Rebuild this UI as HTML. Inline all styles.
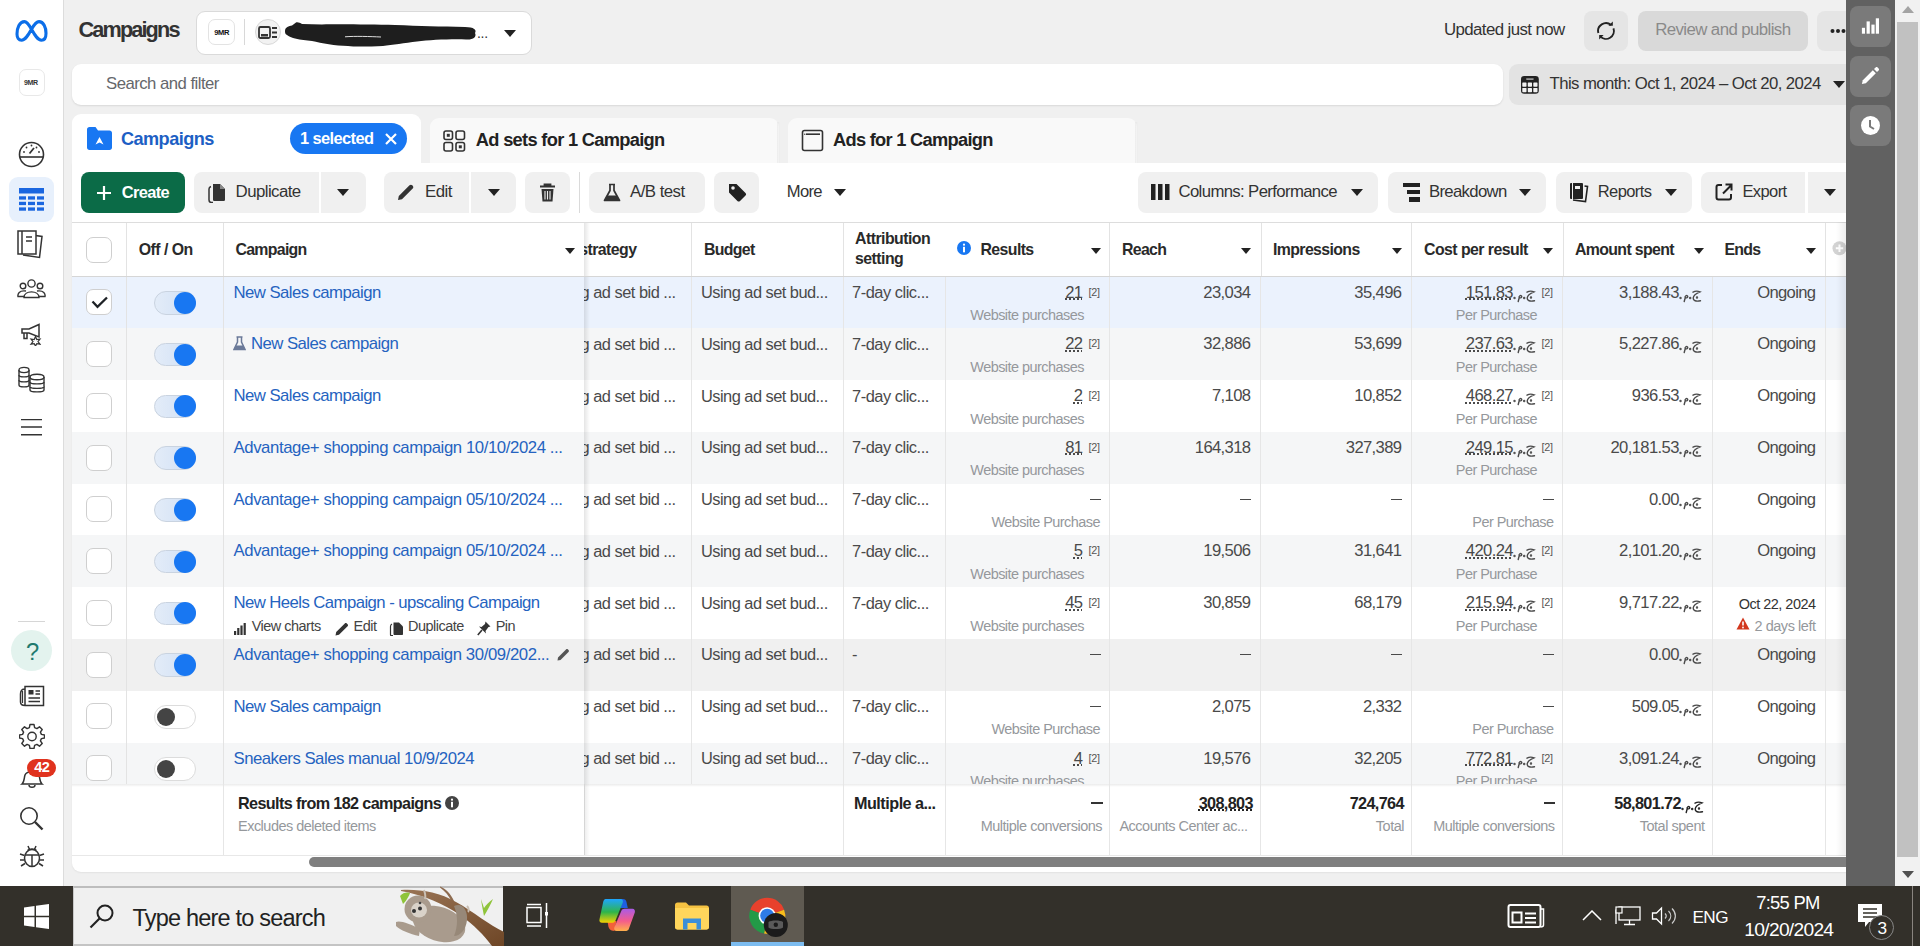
<!DOCTYPE html><html><head><meta charset="utf-8"><style>
html,body{margin:0;padding:0;}
body{width:1920px;height:946px;overflow:hidden;position:relative;background:#f0f0f0;font-family:"Liberation Sans", sans-serif;}
.t{position:absolute;white-space:nowrap;line-height:0;}
.r{position:absolute;}
.du{text-decoration:underline dotted 1.5px;text-underline-offset:1px;}
</style></head><body>
<div class="r" style="left:0.00px;top:0.00px;width:63.00px;height:886.00px;background:#fff;"></div>
<div class="r" style="left:63.00px;top:0.00px;width:1.00px;height:886.00px;background:#dcdcdc;"></div>
<svg class="r" style="left:14.00px;top:19.00px;" width="35" height="25" viewBox="0 0 35 25"><path d="M7.5 21.2 C11.5 21.2 14.5 15.5 17.5 10.2 C20 5.8 22 2.6 25 2.6 C29.5 2.6 32 8.5 32 14.2 C32 18.5 30.5 21.2 27.5 21.2 C23.5 21.2 20.5 15.5 17.5 10.2 C15 5.8 13 2.6 10.5 2.6 C5.5 2.6 3 9 3 15 C3 18.8 4.8 21.2 7.5 21.2Z" fill="none" stroke="#0c6ee8" stroke-width="3.1"/></svg>
<div class="r" style="left:18.50px;top:69.00px;width:26.00px;height:26.50px;background:#fff;border:1px solid #e8e8e8;border-radius:7px;box-sizing:border-box;"></div>
<div class="t" style="left:24.00px;top:82.50px;font-size:7.02px;color:#333;font-weight:700;letter-spacing:-0.366px;">9MR</div>
<svg class="r" style="left:18.00px;top:141.00px;" width="27" height="27" viewBox="0 0 27 27"><circle cx="13.5" cy="13.5" r="12" fill="none" stroke="#333" stroke-width="1.6"/><path d="M1.8 16H25.2" stroke="#333" stroke-width="1.6"/><path d="M11.5 12.5L16 7" stroke="#333" stroke-width="1.8"/><circle cx="6" cy="11" r="0.9" fill="#333"/><circle cx="8.5" cy="6.5" r="0.9" fill="#333"/><circle cx="13.5" cy="4.5" r="0.9" fill="#333"/><circle cx="18.5" cy="6.5" r="0.9" fill="#333"/><circle cx="21" cy="11" r="0.9" fill="#333"/></svg>
<div class="r" style="left:9.00px;top:177.00px;width:45.00px;height:45.00px;background:#e7f0fc;border-radius:9px;"></div>
<svg class="r" style="left:19.00px;top:188.00px;" width="25" height="23" viewBox="0 0 25 23"><rect x="0" y="0" width="25" height="5.5" fill="#1a66e0"/><rect x="0" y="8.3" width="7" height="3.3" fill="#1a66e0"/><rect x="0" y="13.8" width="7" height="3.3" fill="#1a66e0"/><rect x="0" y="19.4" width="7" height="3.3" fill="#1a66e0"/><rect x="9" y="8.3" width="7" height="3.3" fill="#1a66e0"/><rect x="9" y="13.8" width="7" height="3.3" fill="#1a66e0"/><rect x="9" y="19.4" width="7" height="3.3" fill="#1a66e0"/><rect x="18" y="8.3" width="7" height="3.3" fill="#1a66e0"/><rect x="18" y="13.8" width="7" height="3.3" fill="#1a66e0"/><rect x="18" y="19.4" width="7" height="3.3" fill="#1a66e0"/></svg>
<svg class="r" style="left:17.00px;top:230.00px;" width="28" height="29" viewBox="0 0 28 29"><path d="M8 4 L25 6.5 L22.5 27.5 L6 25" fill="#fff" stroke="#333" stroke-width="1.5"/><rect x="1" y="1" width="18" height="23" fill="#fff" stroke="#333" stroke-width="1.5"/><path d="M5 1V24" stroke="#333" stroke-width="1.5"/><path d="M9 7H15M9 11H15" stroke="#333" stroke-width="1.5"/></svg>
<svg class="r" style="left:17.00px;top:279.00px;" width="29" height="20" viewBox="0 0 29 20"><circle cx="14.5" cy="4.5" r="3.6" fill="none" stroke="#333" stroke-width="1.4"/><circle cx="6" cy="7" r="2.8" fill="none" stroke="#333" stroke-width="1.4"/><circle cx="23" cy="7" r="2.8" fill="none" stroke="#333" stroke-width="1.4"/><path d="M7 18.5 C7 11 22 11 22 18.5Z" fill="#fff" stroke="#333" stroke-width="1.4"/><path d="M9 12 C2 11 0.5 15 1 17.5 H7" fill="none" stroke="#333" stroke-width="1.4"/><path d="M20 12 C27 11 28.5 15 28 17.5 H22" fill="none" stroke="#333" stroke-width="1.4"/></svg>
<svg class="r" style="left:20.00px;top:323.00px;" width="23" height="23" viewBox="0 0 23 23"><path d="M2 6 H9 L19 1.5 V14 L9 10 H2Z" fill="none" stroke="#333" stroke-width="1.5"/><path d="M4 10 V15.5 H7 V10" fill="none" stroke="#333" stroke-width="1.5"/><path d="M15.5 13.5 L16.8 16.5 L20 16 L18 18.6 L20 21.2 L16.8 20.7 L15.5 23 L14.2 20.7 L11 21.2 L13 18.6 L11 16 L14.2 16.5Z" fill="#fff" stroke="#333" stroke-width="1.2"/></svg>
<svg class="r" style="left:18.00px;top:366.00px;" width="28" height="28" viewBox="0 0 28 28"><g fill="#fff" stroke="#333" stroke-width="1.4"><path d="M1 4 V19 C1 21.5 11 21.5 11 19 V4"/><ellipse cx="6" cy="4" rx="5" ry="2.6"/><path d="M1 9 C1 11.5 11 11.5 11 9M1 14 C1 16.5 11 16.5 11 14"/><path d="M12 11 V24 C12 26.5 26 26.5 26 24 V11"/><ellipse cx="19" cy="11" rx="7" ry="2.8"/><path d="M12 16 C12 18.5 26 18.5 26 16M12 20.5 C12 23 26 23 26 20.5"/></g></svg>
<svg class="r" style="left:20.00px;top:418.00px;" width="23" height="19" viewBox="0 0 23 19"><path d="M1 1.6H22M1 9H22M1 16.8H22" stroke="#333" stroke-width="1.4"/></svg>
<div class="r" style="left:18.00px;top:621.00px;width:27.00px;height:1.00px;background:#d6d6d6;"></div>
<div class="r" style="left:11.00px;top:630.00px;width:41.00px;height:41.00px;background:#e3f3ee;border-radius:50%;"></div>
<div class="t" style="left:-268.01px;width:600px;text-align:center;top:651.50px;font-size:23.76px;color:#1f7a6e;font-weight:400;letter-spacing:-0.979px;">?</div>
<svg class="r" style="left:19.00px;top:685.00px;" width="26" height="23" viewBox="0 0 26 23"><path d="M6 1.5 H24.5 V20.5 H6Z M6 4 C3 4 1.5 6 1.5 9 V17 C1.5 19.5 3.5 20.5 6 20.5" fill="none" stroke="#333" stroke-width="1.5"/><path d="M3.5 6 V18" stroke="#333" stroke-width="1.2"/><rect x="9.5" y="5" width="5" height="4.5" fill="#333"/><path d="M9.5 13H21M9.5 16.5H21M16.5 6H21M16.5 9H21" stroke="#333" stroke-width="1.3"/></svg>
<svg class="r" style="left:19.00px;top:723.00px;" width="26" height="26" viewBox="0 0 26 26"><path d="M11 1.5H15L15.6 4.6 17.9 5.6 20.5 3.8 23.2 6.5 21.4 9.1 22.4 11.4 25.5 12V15L22.4 15.6 21.4 17.9 23.2 20.5 20.5 23.2 17.9 21.4 15.6 22.4 15 25.5H11L10.4 22.4 8.1 21.4 5.5 23.2 2.8 20.5 4.6 17.9 3.6 15.6 0.5 15V12L3.6 11.4 4.6 9.1 2.8 6.5 5.5 3.8 8.1 5.6 10.4 4.6Z" fill="none" stroke="#333" stroke-width="1.4" stroke-linejoin="round"/><circle cx="13" cy="13.5" r="4.2" fill="none" stroke="#333" stroke-width="1.4"/></svg>
<svg class="r" style="left:19.00px;top:766.00px;" width="26" height="24" viewBox="0 0 26 24"><path d="M3 18 C5.5 16 5 12 6 9 C7.5 4.5 18.5 4.5 20 9 C21 12 20.5 16 23 18Z" fill="none" stroke="#333" stroke-width="1.5"/><path d="M10 19 C10 22 16 22 16 19" fill="none" stroke="#333" stroke-width="1.5"/></svg>
<div class="r" style="left:27.00px;top:759.00px;width:29.00px;height:17.50px;background:#e0321e;border-radius:9px;"></div>
<div class="t" style="left:-258.20px;width:600px;text-align:center;top:767.00px;font-size:14.58px;color:#fff;font-weight:700;letter-spacing:-0.601px;">42</div>
<svg class="r" style="left:19.00px;top:806.00px;" width="26" height="25" viewBox="0 0 26 25"><circle cx="10" cy="10" r="8.2" fill="none" stroke="#333" stroke-width="1.6"/><path d="M16 16 L23.5 23.5" stroke="#333" stroke-width="2.4"/></svg>
<svg class="r" style="left:19.00px;top:843.00px;" width="26" height="26" viewBox="0 0 26 26"><ellipse cx="13" cy="15" rx="7.5" ry="8.5" fill="none" stroke="#333" stroke-width="1.5"/><path d="M6 12H20M13 12V23.5M9 3 L10.5 6.5M17 3 L15.5 6.5M8.5 7.5 C10 5.5 16 5.5 17.5 7.5M1 11L5.5 12.5M25 11L20.5 12.5M1 17H5.5M25 17H20.5M2 23L6 20.5M24 23L20 20.5" fill="none" stroke="#333" stroke-width="1.5"/></svg>
<div class="t" style="left:78.50px;top:30.00px;font-size:21.70px;color:#333333;font-weight:700;letter-spacing:-1.870px;">Campaigns</div>
<div class="r" style="left:195.50px;top:11.00px;width:336.50px;height:44.00px;background:#fff;border:1px solid #dadada;border-radius:9px;box-sizing:border-box;"></div>
<div class="r" style="left:208.00px;top:19.00px;width:27.00px;height:26.00px;background:#fff;border:1px solid #e3e3e3;border-radius:7px;box-sizing:border-box;"></div>
<div class="t" style="left:-78.30px;width:600px;text-align:center;top:32.50px;font-size:7.56px;color:#111;font-weight:700;letter-spacing:-0.394px;">9MR</div>
<div class="r" style="left:244.00px;top:19.00px;width:1.00px;height:26.00px;background:#d8d8d8;"></div>
<div class="r" style="left:254.50px;top:19.00px;width:26.00px;height:26.00px;background:#f2f2f2;border:1px solid #d8d8d8;border-radius:50%;box-sizing:border-box;"></div>
<svg class="r" style="left:258.00px;top:25.00px;" width="20" height="15" viewBox="0 0 20 15"><rect x="1" y="2" width="11" height="11" rx="1.5" fill="none" stroke="#333" stroke-width="1.8"/><rect x="3" y="9" width="7" height="2.5" fill="#333"/><path d="M14 3H19M14 7.5H19M14 12H19" stroke="#333" stroke-width="1.8"/></svg>
<svg class="r" style="left:280.00px;top:16.00px;" width="220" height="34" viewBox="0 0 220 34"><path d="M5 15 C5 11 9 10 12 9.5 L16 6.5 C18 6 20 7 22 8 L42 8.5 C60 8 90 8.5 115 9 C140 10 160 10.5 185 11 C194 11 197 14 195 17 C197 21 193 24 186 23.5 C170 23 150 24 137 25.5 C125 27 112 29 103 30 C90 30.5 75 31 68 30 C55 30 42 27 32 25 C20 24 10 22 7 19 C5 18 5 16.5 5 15Z" fill="#1e1e1e"/><path d="M65 20.8 C75 20 90 20.5 101 21" stroke="#ddd" stroke-width="1" fill="none"/></svg>
<div class="t" style="left:477.00px;top:33.00px;font-size:14.04px;color:#333;font-weight:400;letter-spacing:-0.289px;">...</div>
<svg class="r" style="left:504.00px;top:29.50px;" width="12" height="7" viewBox="0 0 12 7"><path d="M0 0H12L6.0 7Z" fill="#222222"/></svg>
<div class="t" style="left:1444.00px;top:30.00px;font-size:16.85px;color:#333333;font-weight:400;letter-spacing:-0.603px;">Updated just now</div>
<div class="r" style="left:1583.50px;top:10.50px;width:44.50px;height:40.50px;background:#e5e5e5;border-radius:8px;"></div>
<svg class="r" style="left:1596.00px;top:21.00px;" width="20" height="20" viewBox="0 0 20 20"><path d="M2.37 12.04 A7.9 7.9 0 0 1 15.08 3.95" fill="none" stroke="#222" stroke-width="1.9"/><path d="M16.8 4.8 L16.8 0.6 L12.4 4.8Z" fill="#222"/><path d="M17.47 7.43 A7.9 7.9 0 0 1 4.22 15.39" fill="none" stroke="#222" stroke-width="1.9"/><path d="M3.2 14 L3.2 18.6 L7.6 14Z" fill="#222"/></svg>
<div class="r" style="left:1637.50px;top:10.50px;width:170.50px;height:40.50px;background:#d9d9d9;border-radius:8px;"></div>
<div class="t" style="left:1422.80px;width:600px;text-align:center;top:30.00px;font-size:16.85px;color:#8a8a8a;font-weight:400;letter-spacing:-0.601px;">Review and publish</div>
<div class="r" style="left:1817.00px;top:10.50px;width:53.00px;height:40.50px;background:#e5e5e5;border-radius:8px;"></div>
<svg class="r" style="left:1830.00px;top:28.00px;" width="16" height="6" viewBox="0 0 16 6"><circle cx="2.5" cy="3" r="2" fill="#222222"/><circle cx="8" cy="3" r="2" fill="#222222"/><circle cx="13.5" cy="3" r="2" fill="#222222"/></svg>
<div class="r" style="left:72.00px;top:64.00px;width:1431.00px;height:41.00px;background:#fff;border-radius:9px;box-shadow:0 1px 2px rgba(0,0,0,0.10);"></div>
<div class="t" style="left:106.00px;top:83.50px;font-size:16.74px;color:#65676b;font-weight:400;letter-spacing:-0.531px;">Search and filter</div>
<div class="r" style="left:1508.50px;top:64.00px;width:361.50px;height:41.00px;background:#e3e3e3;border-radius:9px;"></div>
<svg class="r" style="left:1520.00px;top:75.00px;" width="20" height="20" viewBox="0 0 20 20"><rect x="1" y="1" width="17.8" height="17.7" rx="3.2" fill="#222"/><rect x="2.3" y="7.4" width="4.2" height="4.3" rx="0.6" fill="#f2f2f2"/><rect x="2.3" y="12.9" width="4.2" height="4.3" rx="0.6" fill="#f2f2f2"/><rect x="7.8" y="7.4" width="4.2" height="4.3" rx="0.6" fill="#f2f2f2"/><rect x="7.8" y="12.9" width="4.2" height="4.3" rx="0.6" fill="#f2f2f2"/><rect x="13.3" y="7.4" width="4.2" height="4.3" rx="0.6" fill="#f2f2f2"/><rect x="13.3" y="12.9" width="4.2" height="4.3" rx="0.6" fill="#f2f2f2"/><rect x="6" y="3.3" width="7.8" height="1.6" rx="0.8" fill="#999"/></svg>
<div class="t" style="left:1549.50px;top:83.50px;font-size:16.74px;color:#333333;font-weight:400;letter-spacing:-0.571px;">This month: Oct 1, 2024 – Oct 20, 2024</div>
<svg class="r" style="left:1832.50px;top:81.00px;" width="12" height="7" viewBox="0 0 12 7"><path d="M0 0H12L6.0 7Z" fill="#222222"/></svg>
<div class="r" style="left:430.00px;top:118.00px;width:349.00px;height:57.00px;background:#f9f9f9;border-radius:9px 9px 0 0;"></div>
<div class="r" style="left:788.00px;top:118.00px;width:349.00px;height:57.00px;background:#f9f9f9;border-radius:9px 9px 0 0;"></div>
<div class="r" style="left:72.00px;top:114.00px;width:349.00px;height:61.00px;background:#fff;border-radius:9px 9px 0 0;"></div>
<div class="r" style="left:777.00px;top:122.00px;width:3.00px;height:41.00px;background:linear-gradient(90deg,rgba(0,0,0,0.05),rgba(0,0,0,0));"></div>
<div class="r" style="left:1135.00px;top:122.00px;width:3.00px;height:41.00px;background:linear-gradient(90deg,rgba(0,0,0,0.05),rgba(0,0,0,0));"></div>
<div class="r" style="left:72.00px;top:163.00px;width:1798.00px;height:709.00px;background:#fff;border-radius:0 0 9px 9px;box-shadow:0 1px 2px rgba(0,0,0,0.06);"></div>
<svg class="r" style="left:87.00px;top:127.00px;" width="25" height="23" viewBox="0 0 25 23"><path d="M0 2.5 C0 1 1 0 2.5 0 H8.5 L11 3.5 H22.5 C24 3.5 25 4.5 25 6 V20.5 C25 22 24 23 22.5 23 H2.5 C1 23 0 22 0 20.5Z" fill="#1877f2"/><path d="M8.5 17.5 L12.5 10 L16.5 17.5 L12.5 15.5Z" fill="#fff"/></svg>
<div class="t" style="left:121.00px;top:138.50px;font-size:18.14px;color:#1d5fc4;font-weight:700;letter-spacing:-0.555px;">Campaigns</div>
<div class="r" style="left:290.00px;top:123.00px;width:117.00px;height:31.00px;background:#1877f2;border-radius:16px;"></div>
<div class="t" style="left:300.00px;top:137.50px;font-size:16.42px;color:#fff;font-weight:700;letter-spacing:-0.588px;">1 selected</div>
<svg class="r" style="left:385.00px;top:133.00px;" width="12" height="12" viewBox="0 0 12 12"><path d="M1 1L11 11M11 1L1 11" stroke="#fff" stroke-width="2.2"/></svg>
<svg class="r" style="left:443.00px;top:130.00px;" width="23" height="22" viewBox="0 0 23 22"><g fill="none" stroke="#333" stroke-width="1.6"><rect x="1" y="1" width="8.5" height="8.5" rx="2"/><rect x="13" y="1" width="8.5" height="8.5" rx="2"/><rect x="1" y="12.5" width="8.5" height="8.5" rx="2"/><rect x="13" y="12.5" width="8.5" height="8.5" rx="2"/></g><rect x="3.8" y="3.8" width="3" height="3" fill="#333"/><rect x="15.8" y="15.3" width="3" height="3" fill="#333"/></svg>
<div class="t" style="left:475.80px;top:140.00px;font-size:18.25px;color:#222222;font-weight:700;letter-spacing:-0.686px;">Ad sets for 1 Campaign</div>
<svg class="r" style="left:801.00px;top:129.00px;" width="23" height="23" viewBox="0 0 23 23"><rect x="1.5" y="1.5" width="20" height="20" rx="2" fill="none" stroke="#333" stroke-width="1.6"/><path d="M5 5.2H19" stroke="#333" stroke-width="1.6"/><circle cx="3.8" cy="5.2" r="0.7" fill="#333"/></svg>
<div class="t" style="left:833.00px;top:140.00px;font-size:18.25px;color:#222222;font-weight:700;letter-spacing:-0.709px;">Ads for 1 Campaign</div>
<div class="r" style="left:81.00px;top:172.00px;width:104.00px;height:41.00px;background:#0b6b47;border-radius:8px;"></div>
<svg class="r" style="left:97.00px;top:186.00px;" width="14" height="14" viewBox="0 0 14 14"><path d="M7 0V14M0 7H14" stroke="#fff" stroke-width="2.2"/></svg>
<div class="t" style="left:121.80px;top:191.50px;font-size:16.42px;color:#fff;font-weight:700;letter-spacing:-0.631px;">Create</div>
<div class="r" style="left:194.00px;top:172.00px;width:125.00px;height:41.00px;background:#f0f0f0;border-radius:8px 0 0 8px;"></div>
<div class="r" style="left:321.00px;top:172.00px;width:45.00px;height:41.00px;background:#f0f0f0;border-radius:0 8px 8px 0;"></div>
<svg class="r" style="left:207.00px;top:183.00px;" width="20" height="20" viewBox="0 0 20 20"><path d="M4 3.5 C2.5 4 2 5 2 6 V17 C2 18.5 3 19.5 4.5 19.5 H6" fill="none" stroke="#333" stroke-width="1.5"/><path d="M6 1 H13 L18 6 V16.5 C18 17.5 17.3 18 16.5 18 H7.5 C6.7 18 6 17.5 6 16.5Z" fill="#333"/><path d="M13 1 V6 H18" fill="#888"/></svg>
<div class="t" style="left:235.60px;top:192.00px;font-size:16.85px;color:#333333;font-weight:400;letter-spacing:-0.578px;">Duplicate</div>
<svg class="r" style="left:337.00px;top:188.50px;" width="12" height="7" viewBox="0 0 12 7"><path d="M0 0H12L6.0 7Z" fill="#222222"/></svg>
<div class="r" style="left:384.00px;top:172.00px;width:84.50px;height:41.00px;background:#f0f0f0;border-radius:8px 0 0 8px;"></div>
<div class="r" style="left:471.00px;top:172.00px;width:45.00px;height:41.00px;background:#f0f0f0;border-radius:0 8px 8px 0;"></div>
<svg class="r" style="left:397.00px;top:183.00px;" width="18" height="18" viewBox="0 0 18 18"><path d="M1 17 L1.8 13 L12.5 2.3 C13.3 1.5 14.5 1.5 15.3 2.3 L15.7 2.7 C16.5 3.5 16.5 4.7 15.7 5.5 L5 16.2Z" fill="#333"/></svg>
<div class="t" style="left:425.00px;top:192.00px;font-size:16.85px;color:#333333;font-weight:400;letter-spacing:-0.538px;">Edit</div>
<svg class="r" style="left:487.50px;top:188.50px;" width="12" height="7" viewBox="0 0 12 7"><path d="M0 0H12L6.0 7Z" fill="#222222"/></svg>
<div class="r" style="left:525.00px;top:172.00px;width:45.00px;height:41.00px;background:#f0f0f0;border-radius:8px;"></div>
<svg class="r" style="left:539.00px;top:183.00px;" width="17" height="19" viewBox="0 0 17 19"><path d="M1 3.5H16M5.5 3.5V1.5H11.5V3.5" fill="none" stroke="#333" stroke-width="1.8"/><path d="M2.5 6H14.5L13.5 18.5H3.5Z" fill="#333"/><path d="M6 8V16.5M8.5 8V16.5M11 8V16.5" stroke="#f0f0f0" stroke-width="1.1"/></svg>
<div class="r" style="left:579.00px;top:172.00px;width:1.00px;height:41.00px;background:#dadada;"></div>
<div class="r" style="left:589.00px;top:172.00px;width:115.50px;height:41.00px;background:#f0f0f0;border-radius:8px;"></div>
<svg class="r" style="left:603.00px;top:183.00px;" width="18" height="19" viewBox="0 0 18 19"><path d="M6 1.5H12M7 1.5V7.5L1.5 17.5H16.5L11 7.5V1.5" fill="none" stroke="#333" stroke-width="1.7" stroke-linejoin="round"/><path d="M4 12.5H14L16.5 17.5H1.5Z" fill="#333"/></svg>
<div class="t" style="left:630.00px;top:192.00px;font-size:16.85px;color:#333333;font-weight:400;letter-spacing:-0.546px;">A/B test</div>
<div class="r" style="left:714.00px;top:172.00px;width:45.00px;height:41.00px;background:#f0f0f0;border-radius:8px;"></div>
<svg class="r" style="left:727.00px;top:182.00px;" width="20" height="20" viewBox="0 0 20 20"><path d="M2 2 H9.5 L18.5 11 C19.3 11.8 19.3 12.8 18.5 13.6 L13 19 C12.2 19.8 11.2 19.8 10.4 19 L2 10.6Z" fill="#222222"/><circle cx="6" cy="6" r="1.8" fill="#f0f0f0"/></svg>
<div class="t" style="left:786.80px;top:192.00px;font-size:16.63px;color:#333333;font-weight:400;letter-spacing:-0.702px;">More</div>
<svg class="r" style="left:834.00px;top:188.50px;" width="12" height="7" viewBox="0 0 12 7"><path d="M0 0H12L6.0 7Z" fill="#222222"/></svg>
<div class="r" style="left:1137.50px;top:172.00px;width:240.50px;height:41.00px;background:#f0f0f0;border-radius:8px;"></div>
<svg class="r" style="left:1150.50px;top:184.00px;" width="19" height="16" viewBox="0 0 19 16"><rect x="0" y="0" width="4.5" height="16" fill="#222222"/><rect x="7" y="0" width="4.5" height="16" fill="#222222"/><rect x="14" y="0" width="4.5" height="16" fill="#222222"/></svg>
<div class="t" style="left:1178.50px;top:192.00px;font-size:16.74px;color:#333333;font-weight:400;letter-spacing:-0.634px;">Columns: Performance</div>
<svg class="r" style="left:1351.00px;top:188.50px;" width="12" height="7" viewBox="0 0 12 7"><path d="M0 0H12L6.0 7Z" fill="#222222"/></svg>
<div class="r" style="left:1388.00px;top:172.00px;width:158.00px;height:41.00px;background:#f0f0f0;border-radius:8px;"></div>
<svg class="r" style="left:1403.00px;top:183.00px;" width="17" height="19" viewBox="0 0 17 19"><rect x="0" y="0" width="17" height="4" fill="#222222"/><rect x="4" y="7" width="13" height="4" fill="#222222"/><rect x="6" y="14" width="11" height="5" fill="#222222"/></svg>
<div class="t" style="left:1429.00px;top:192.00px;font-size:16.74px;color:#333333;font-weight:400;letter-spacing:-0.689px;">Breakdown</div>
<svg class="r" style="left:1518.50px;top:188.50px;" width="12" height="7" viewBox="0 0 12 7"><path d="M0 0H12L6.0 7Z" fill="#222222"/></svg>
<div class="r" style="left:1556.00px;top:172.00px;width:136.00px;height:41.00px;background:#f0f0f0;border-radius:8px;"></div>
<svg class="r" style="left:1569.00px;top:182.00px;" width="20" height="21" viewBox="0 0 20 21"><rect x="1" y="1" width="13" height="16" rx="1" fill="#222222"/><path d="M15.5 4 L18.5 4.5 L16.5 19.5 L4 18" fill="none" stroke="#222222" stroke-width="1.6"/><rect x="6" y="4" width="5" height="3" fill="#f0f0f0"/><path d="M3.5 1V17" stroke="#f0f0f0" stroke-width="1"/></svg>
<div class="t" style="left:1597.80px;top:192.00px;font-size:16.52px;color:#333333;font-weight:400;letter-spacing:-0.612px;">Reports</div>
<svg class="r" style="left:1664.50px;top:188.50px;" width="12" height="7" viewBox="0 0 12 7"><path d="M0 0H12L6.0 7Z" fill="#222222"/></svg>
<div class="r" style="left:1701.00px;top:172.00px;width:104.00px;height:41.00px;background:#f0f0f0;border-radius:8px 0 0 8px;"></div>
<div class="r" style="left:1808.00px;top:172.00px;width:62.00px;height:41.00px;background:#f0f0f0;border-radius:0 8px 8px 0;"></div>
<svg class="r" style="left:1715.00px;top:183.00px;" width="18" height="18" viewBox="0 0 18 18"><path d="M7 2H3.5C2.5 2 1.5 3 1.5 4V14.5C1.5 15.5 2.5 16.5 3.5 16.5H14C15 16.5 16 15.5 16 14.5V11" fill="none" stroke="#222222" stroke-width="2"/><path d="M8 10.5L16 2.5M10.5 1.5H16.5V7.5" fill="none" stroke="#222222" stroke-width="2"/></svg>
<div class="t" style="left:1742.40px;top:192.00px;font-size:16.52px;color:#333333;font-weight:400;letter-spacing:-0.590px;">Export</div>
<svg class="r" style="left:1824.00px;top:188.50px;" width="12" height="7" viewBox="0 0 12 7"><path d="M0 0H12L6.0 7Z" fill="#222222"/></svg>
<div class="r" style="left:72.00px;top:221.50px;width:1774.00px;height:1.00px;background:#dddddd;"></div>
<div class="r" style="left:72.00px;top:275.50px;width:1774.00px;height:1.00px;background:#d6d6d6;"></div>
<div class="r" style="left:126.00px;top:222.50px;width:1.00px;height:53.00px;background:#e3e3e3;"></div>
<div class="r" style="left:223.00px;top:222.50px;width:1.00px;height:53.00px;background:#e3e3e3;"></div>
<div class="r" style="left:691.00px;top:222.50px;width:1.00px;height:53.00px;background:#e3e3e3;"></div>
<div class="r" style="left:843.00px;top:222.50px;width:1.00px;height:53.00px;background:#e3e3e3;"></div>
<div class="r" style="left:1109.00px;top:222.50px;width:1.00px;height:53.00px;background:#e3e3e3;"></div>
<div class="r" style="left:1260.50px;top:222.50px;width:1.00px;height:53.00px;background:#e3e3e3;"></div>
<div class="r" style="left:1411.00px;top:222.50px;width:1.00px;height:53.00px;background:#e3e3e3;"></div>
<div class="r" style="left:1562.50px;top:222.50px;width:1.00px;height:53.00px;background:#e3e3e3;"></div>
<div class="r" style="left:1825.00px;top:222.50px;width:1.00px;height:53.00px;background:#e3e3e3;"></div>
<div class="r" style="left:0;top:276.5px;width:1920px;height:507.5px;overflow:hidden;">
<div class="r" style="left:72.00px;top:0.00px;width:1774.00px;height:51.78px;background:#ebf2fd;"></div>
<div class="r" style="left:691.00px;top:0.00px;width:1.00px;height:51.78px;background:#e6e6e6;"></div>
<div class="r" style="left:843.00px;top:0.00px;width:1.00px;height:51.78px;background:#e6e6e6;"></div>
<div class="r" style="left:945.00px;top:0.00px;width:1.00px;height:51.78px;background:#e6e6e6;"></div>
<div class="r" style="left:1109.00px;top:0.00px;width:1.00px;height:51.78px;background:#e6e6e6;"></div>
<div class="r" style="left:1260.00px;top:0.00px;width:1.00px;height:51.78px;background:#e6e6e6;"></div>
<div class="r" style="left:1411.00px;top:0.00px;width:1.00px;height:51.78px;background:#e6e6e6;"></div>
<div class="r" style="left:1562.00px;top:0.00px;width:1.00px;height:51.78px;background:#e6e6e6;"></div>
<div class="r" style="left:1712.00px;top:0.00px;width:1.00px;height:51.78px;background:#e6e6e6;"></div>
<div class="r" style="left:1825.00px;top:0.00px;width:1.00px;height:51.78px;background:#e6e6e6;"></div>
<div class="t" style="right:1244.50px;text-align:right;top:15.50px;font-size:16.42px;color:#4a4a4a;font-weight:400;letter-spacing:-0.504px;">Using ad set bid ...</div>
<div class="t" style="left:701.00px;top:15.50px;font-size:16.42px;color:#4a4a4a;font-weight:400;letter-spacing:-0.534px;">Using ad set bud...</div>
<div class="t" style="left:852.00px;top:15.50px;font-size:16.42px;color:#4a4a4a;font-weight:400;letter-spacing:-0.473px;">7-day clic...</div>
<div class="t" style="right:837.69px;text-align:right;top:16.00px;font-size:16.63px;color:#4a4a4a;font-weight:400;letter-spacing:-0.685px;"><span class="du">21</span></div>
<div class="t" style="right:820.30px;text-align:right;top:15.00px;font-size:10.80px;color:#555;font-weight:400;letter-spacing:-0.296px;">[2]</div>
<div class="t" style="right:836.04px;text-align:right;top:38.50px;font-size:14.47px;color:#95989c;font-weight:400;letter-spacing:-0.535px;">Website purchases</div>
<div class="t" style="right:669.63px;text-align:right;top:16.00px;font-size:16.63px;color:#4a4a4a;font-weight:400;letter-spacing:-0.628px;">23,034</div>
<div class="t" style="right:518.63px;text-align:right;top:16.00px;font-size:16.63px;color:#4a4a4a;font-weight:400;letter-spacing:-0.628px;">35,496</div>
<div class="t" style="right:383.63px;text-align:right;top:16.00px;font-size:16.63px;color:#4a4a4a;font-weight:400;letter-spacing:-0.628px;"><span class="du">151.83<span style="display:inline-block;position:relative;width:23.5px;height:0"><svg width="23" height="17" viewBox="0 0 23 17" style="position:absolute;left:0.5px;bottom:-5px"><g fill="none" stroke="currentColor" stroke-width="1.4" stroke-linecap="round"><circle cx="1.5" cy="12" r="0.5"/><path d="M6.8 9.8 C8.8 8.6 9.6 11.6 7.4 11.9 C6.4 12 5.8 11.4 6.2 10.6 M6.3 11.5 L5.2 15.5"/><circle cx="11.2" cy="12" r="0.5"/><path d="M14 6.2 C16 5 19 5 21 5.8 C18 7 14.5 9.5 14.2 12 C14 14.8 17 15.6 21.5 14.8"/><circle cx="18" cy="11.5" r="0.5"/></g></svg></span></span></div>
<div class="t" style="right:367.30px;text-align:right;top:15.00px;font-size:10.80px;color:#555;font-weight:400;letter-spacing:-0.296px;">[2]</div>
<div class="t" style="right:383.04px;text-align:right;top:38.50px;font-size:14.47px;color:#95989c;font-weight:400;letter-spacing:-0.541px;">Per Purchase</div>
<div class="t" style="right:217.60px;text-align:right;top:16.00px;font-size:16.63px;color:#4a4a4a;font-weight:400;letter-spacing:-0.599px;">3,188.43<span style="display:inline-block;position:relative;width:23.5px;height:0"><svg width="23" height="17" viewBox="0 0 23 17" style="position:absolute;left:0.5px;bottom:-5px"><g fill="none" stroke="currentColor" stroke-width="1.4" stroke-linecap="round"><circle cx="1.5" cy="12" r="0.5"/><path d="M6.8 9.8 C8.8 8.6 9.6 11.6 7.4 11.9 C6.4 12 5.8 11.4 6.2 10.6 M6.3 11.5 L5.2 15.5"/><circle cx="11.2" cy="12" r="0.5"/><path d="M14 6.2 C16 5 19 5 21 5.8 C18 7 14.5 9.5 14.2 12 C14 14.8 17 15.6 21.5 14.8"/><circle cx="18" cy="11.5" r="0.5"/></g></svg></span></div>
<div class="t" style="right:104.67px;text-align:right;top:16.00px;font-size:16.63px;color:#4a4a4a;font-weight:400;letter-spacing:-0.665px;">Ongoing</div>
<div class="r" style="left:72.00px;top:0.00px;width:512.00px;height:51.78px;background:#ebf2fd;"></div>
<div class="r" style="left:126.00px;top:0.00px;width:1.00px;height:51.78px;background:#e3e3e3;"></div>
<div class="r" style="left:223.00px;top:0.00px;width:1.00px;height:51.78px;background:#e3e3e3;"></div>
<div class="r" style="left:86.00px;top:12.70px;width:26.00px;height:26.00px;background:#fff;border:1px solid #cfcfcf;border-radius:7px;box-sizing:border-box;"></div>
<svg class="r" style="left:90.50px;top:19.70px;" width="18" height="14" viewBox="0 0 18 14"><path d="M1.5 5.5 L6.5 10.8 L16 1.5" fill="none" stroke="#1e2226" stroke-width="2.3"/></svg>
<div class="r" style="left:154.00px;top:14.50px;width:41.50px;height:23.50px;background:linear-gradient(90deg,#e3ecf8,#cfdff5);border:1px solid #c9d3e0;border-radius:12px;box-sizing:border-box;"></div>
<div class="r" style="left:173.50px;top:15.30px;width:22.00px;height:22.00px;background:#1877f2;border-radius:50%;"></div>
<div class="t" style="left:233.50px;top:16.00px;font-size:16.74px;color:#2563c0;font-weight:400;letter-spacing:-0.559px;">New Sales campaign</div>
<div class="r" style="left:72.00px;top:51.78px;width:1774.00px;height:51.78px;background:#f5f6f7;"></div>
<div class="r" style="left:691.00px;top:51.78px;width:1.00px;height:51.78px;background:#e6e6e6;"></div>
<div class="r" style="left:843.00px;top:51.78px;width:1.00px;height:51.78px;background:#e6e6e6;"></div>
<div class="r" style="left:945.00px;top:51.78px;width:1.00px;height:51.78px;background:#e6e6e6;"></div>
<div class="r" style="left:1109.00px;top:51.78px;width:1.00px;height:51.78px;background:#e6e6e6;"></div>
<div class="r" style="left:1260.00px;top:51.78px;width:1.00px;height:51.78px;background:#e6e6e6;"></div>
<div class="r" style="left:1411.00px;top:51.78px;width:1.00px;height:51.78px;background:#e6e6e6;"></div>
<div class="r" style="left:1562.00px;top:51.78px;width:1.00px;height:51.78px;background:#e6e6e6;"></div>
<div class="r" style="left:1712.00px;top:51.78px;width:1.00px;height:51.78px;background:#e6e6e6;"></div>
<div class="r" style="left:1825.00px;top:51.78px;width:1.00px;height:51.78px;background:#e6e6e6;"></div>
<div class="t" style="right:1244.50px;text-align:right;top:67.28px;font-size:16.42px;color:#4a4a4a;font-weight:400;letter-spacing:-0.504px;">Using ad set bid ...</div>
<div class="t" style="left:701.00px;top:67.28px;font-size:16.42px;color:#4a4a4a;font-weight:400;letter-spacing:-0.534px;">Using ad set bud...</div>
<div class="t" style="left:852.00px;top:67.28px;font-size:16.42px;color:#4a4a4a;font-weight:400;letter-spacing:-0.473px;">7-day clic...</div>
<div class="t" style="right:837.69px;text-align:right;top:67.78px;font-size:16.63px;color:#4a4a4a;font-weight:400;letter-spacing:-0.685px;"><span class="du">22</span></div>
<div class="t" style="right:820.30px;text-align:right;top:66.78px;font-size:10.80px;color:#555;font-weight:400;letter-spacing:-0.296px;">[2]</div>
<div class="t" style="right:836.04px;text-align:right;top:90.28px;font-size:14.47px;color:#95989c;font-weight:400;letter-spacing:-0.535px;">Website purchases</div>
<div class="t" style="right:669.63px;text-align:right;top:67.78px;font-size:16.63px;color:#4a4a4a;font-weight:400;letter-spacing:-0.628px;">32,886</div>
<div class="t" style="right:518.63px;text-align:right;top:67.78px;font-size:16.63px;color:#4a4a4a;font-weight:400;letter-spacing:-0.628px;">53,699</div>
<div class="t" style="right:383.63px;text-align:right;top:67.78px;font-size:16.63px;color:#4a4a4a;font-weight:400;letter-spacing:-0.628px;"><span class="du">237.63<span style="display:inline-block;position:relative;width:23.5px;height:0"><svg width="23" height="17" viewBox="0 0 23 17" style="position:absolute;left:0.5px;bottom:-5px"><g fill="none" stroke="currentColor" stroke-width="1.4" stroke-linecap="round"><circle cx="1.5" cy="12" r="0.5"/><path d="M6.8 9.8 C8.8 8.6 9.6 11.6 7.4 11.9 C6.4 12 5.8 11.4 6.2 10.6 M6.3 11.5 L5.2 15.5"/><circle cx="11.2" cy="12" r="0.5"/><path d="M14 6.2 C16 5 19 5 21 5.8 C18 7 14.5 9.5 14.2 12 C14 14.8 17 15.6 21.5 14.8"/><circle cx="18" cy="11.5" r="0.5"/></g></svg></span></span></div>
<div class="t" style="right:367.30px;text-align:right;top:66.78px;font-size:10.80px;color:#555;font-weight:400;letter-spacing:-0.296px;">[2]</div>
<div class="t" style="right:383.04px;text-align:right;top:90.28px;font-size:14.47px;color:#95989c;font-weight:400;letter-spacing:-0.541px;">Per Purchase</div>
<div class="t" style="right:217.60px;text-align:right;top:67.78px;font-size:16.63px;color:#4a4a4a;font-weight:400;letter-spacing:-0.599px;">5,227.86<span style="display:inline-block;position:relative;width:23.5px;height:0"><svg width="23" height="17" viewBox="0 0 23 17" style="position:absolute;left:0.5px;bottom:-5px"><g fill="none" stroke="currentColor" stroke-width="1.4" stroke-linecap="round"><circle cx="1.5" cy="12" r="0.5"/><path d="M6.8 9.8 C8.8 8.6 9.6 11.6 7.4 11.9 C6.4 12 5.8 11.4 6.2 10.6 M6.3 11.5 L5.2 15.5"/><circle cx="11.2" cy="12" r="0.5"/><path d="M14 6.2 C16 5 19 5 21 5.8 C18 7 14.5 9.5 14.2 12 C14 14.8 17 15.6 21.5 14.8"/><circle cx="18" cy="11.5" r="0.5"/></g></svg></span></div>
<div class="t" style="right:104.67px;text-align:right;top:67.78px;font-size:16.63px;color:#4a4a4a;font-weight:400;letter-spacing:-0.665px;">Ongoing</div>
<div class="r" style="left:72.00px;top:51.78px;width:512.00px;height:51.78px;background:#f5f6f7;"></div>
<div class="r" style="left:126.00px;top:51.78px;width:1.00px;height:51.78px;background:#e3e3e3;"></div>
<div class="r" style="left:223.00px;top:51.78px;width:1.00px;height:51.78px;background:#e3e3e3;"></div>
<div class="r" style="left:86.00px;top:64.48px;width:26.00px;height:26.00px;background:#fff;border:1px solid #cfcfcf;border-radius:7px;box-sizing:border-box;"></div>
<div class="r" style="left:154.00px;top:66.28px;width:41.50px;height:23.50px;background:linear-gradient(90deg,#e3ecf8,#cfdff5);border:1px solid #c9d3e0;border-radius:12px;box-sizing:border-box;"></div>
<div class="r" style="left:173.50px;top:67.08px;width:22.00px;height:22.00px;background:#1877f2;border-radius:50%;"></div>
<svg class="r" style="left:233.00px;top:59.78px;" width="13" height="15" viewBox="0 0 13 15"><path d="M3.5 1H9.5M4.5 1V6L1 13.5H12L8.5 6V1" fill="none" stroke="#6b7a99" stroke-width="1.5"/><path d="M2.5 9.5H10.5L12 13.5H1Z" fill="#6b7a99"/></svg>
<div class="t" style="left:251.00px;top:67.78px;font-size:16.74px;color:#2563c0;font-weight:400;letter-spacing:-0.559px;">New Sales campaign</div>
<div class="r" style="left:72.00px;top:103.56px;width:1774.00px;height:51.78px;background:#fff;"></div>
<div class="r" style="left:691.00px;top:103.56px;width:1.00px;height:51.78px;background:#e6e6e6;"></div>
<div class="r" style="left:843.00px;top:103.56px;width:1.00px;height:51.78px;background:#e6e6e6;"></div>
<div class="r" style="left:945.00px;top:103.56px;width:1.00px;height:51.78px;background:#e6e6e6;"></div>
<div class="r" style="left:1109.00px;top:103.56px;width:1.00px;height:51.78px;background:#e6e6e6;"></div>
<div class="r" style="left:1260.00px;top:103.56px;width:1.00px;height:51.78px;background:#e6e6e6;"></div>
<div class="r" style="left:1411.00px;top:103.56px;width:1.00px;height:51.78px;background:#e6e6e6;"></div>
<div class="r" style="left:1562.00px;top:103.56px;width:1.00px;height:51.78px;background:#e6e6e6;"></div>
<div class="r" style="left:1712.00px;top:103.56px;width:1.00px;height:51.78px;background:#e6e6e6;"></div>
<div class="r" style="left:1825.00px;top:103.56px;width:1.00px;height:51.78px;background:#e6e6e6;"></div>
<div class="t" style="right:1244.50px;text-align:right;top:119.06px;font-size:16.42px;color:#4a4a4a;font-weight:400;letter-spacing:-0.504px;">Using ad set bid ...</div>
<div class="t" style="left:701.00px;top:119.06px;font-size:16.42px;color:#4a4a4a;font-weight:400;letter-spacing:-0.534px;">Using ad set bud...</div>
<div class="t" style="left:852.00px;top:119.06px;font-size:16.42px;color:#4a4a4a;font-weight:400;letter-spacing:-0.473px;">7-day clic...</div>
<div class="t" style="right:837.69px;text-align:right;top:119.56px;font-size:16.63px;color:#4a4a4a;font-weight:400;letter-spacing:-0.685px;"><span class="du">2</span></div>
<div class="t" style="right:820.30px;text-align:right;top:118.56px;font-size:10.80px;color:#555;font-weight:400;letter-spacing:-0.296px;">[2]</div>
<div class="t" style="right:836.04px;text-align:right;top:142.06px;font-size:14.47px;color:#95989c;font-weight:400;letter-spacing:-0.535px;">Website purchases</div>
<div class="t" style="right:669.62px;text-align:right;top:119.56px;font-size:16.63px;color:#4a4a4a;font-weight:400;letter-spacing:-0.617px;">7,108</div>
<div class="t" style="right:518.63px;text-align:right;top:119.56px;font-size:16.63px;color:#4a4a4a;font-weight:400;letter-spacing:-0.628px;">10,852</div>
<div class="t" style="right:383.63px;text-align:right;top:119.56px;font-size:16.63px;color:#4a4a4a;font-weight:400;letter-spacing:-0.628px;"><span class="du">468.27<span style="display:inline-block;position:relative;width:23.5px;height:0"><svg width="23" height="17" viewBox="0 0 23 17" style="position:absolute;left:0.5px;bottom:-5px"><g fill="none" stroke="currentColor" stroke-width="1.4" stroke-linecap="round"><circle cx="1.5" cy="12" r="0.5"/><path d="M6.8 9.8 C8.8 8.6 9.6 11.6 7.4 11.9 C6.4 12 5.8 11.4 6.2 10.6 M6.3 11.5 L5.2 15.5"/><circle cx="11.2" cy="12" r="0.5"/><path d="M14 6.2 C16 5 19 5 21 5.8 C18 7 14.5 9.5 14.2 12 C14 14.8 17 15.6 21.5 14.8"/><circle cx="18" cy="11.5" r="0.5"/></g></svg></span></span></div>
<div class="t" style="right:367.30px;text-align:right;top:118.56px;font-size:10.80px;color:#555;font-weight:400;letter-spacing:-0.296px;">[2]</div>
<div class="t" style="right:383.04px;text-align:right;top:142.06px;font-size:14.47px;color:#95989c;font-weight:400;letter-spacing:-0.541px;">Per Purchase</div>
<div class="t" style="right:217.63px;text-align:right;top:119.56px;font-size:16.63px;color:#4a4a4a;font-weight:400;letter-spacing:-0.628px;">936.53<span style="display:inline-block;position:relative;width:23.5px;height:0"><svg width="23" height="17" viewBox="0 0 23 17" style="position:absolute;left:0.5px;bottom:-5px"><g fill="none" stroke="currentColor" stroke-width="1.4" stroke-linecap="round"><circle cx="1.5" cy="12" r="0.5"/><path d="M6.8 9.8 C8.8 8.6 9.6 11.6 7.4 11.9 C6.4 12 5.8 11.4 6.2 10.6 M6.3 11.5 L5.2 15.5"/><circle cx="11.2" cy="12" r="0.5"/><path d="M14 6.2 C16 5 19 5 21 5.8 C18 7 14.5 9.5 14.2 12 C14 14.8 17 15.6 21.5 14.8"/><circle cx="18" cy="11.5" r="0.5"/></g></svg></span></div>
<div class="t" style="right:104.67px;text-align:right;top:119.56px;font-size:16.63px;color:#4a4a4a;font-weight:400;letter-spacing:-0.665px;">Ongoing</div>
<div class="r" style="left:72.00px;top:103.56px;width:512.00px;height:51.78px;background:#fff;"></div>
<div class="r" style="left:126.00px;top:103.56px;width:1.00px;height:51.78px;background:#e3e3e3;"></div>
<div class="r" style="left:223.00px;top:103.56px;width:1.00px;height:51.78px;background:#e3e3e3;"></div>
<div class="r" style="left:86.00px;top:116.26px;width:26.00px;height:26.00px;background:#fff;border:1px solid #cfcfcf;border-radius:7px;box-sizing:border-box;"></div>
<div class="r" style="left:154.00px;top:118.06px;width:41.50px;height:23.50px;background:linear-gradient(90deg,#e3ecf8,#cfdff5);border:1px solid #c9d3e0;border-radius:12px;box-sizing:border-box;"></div>
<div class="r" style="left:173.50px;top:118.86px;width:22.00px;height:22.00px;background:#1877f2;border-radius:50%;"></div>
<div class="t" style="left:233.50px;top:119.56px;font-size:16.74px;color:#2563c0;font-weight:400;letter-spacing:-0.559px;">New Sales campaign</div>
<div class="r" style="left:72.00px;top:155.34px;width:1774.00px;height:51.78px;background:#f5f6f7;"></div>
<div class="r" style="left:691.00px;top:155.34px;width:1.00px;height:51.78px;background:#e6e6e6;"></div>
<div class="r" style="left:843.00px;top:155.34px;width:1.00px;height:51.78px;background:#e6e6e6;"></div>
<div class="r" style="left:945.00px;top:155.34px;width:1.00px;height:51.78px;background:#e6e6e6;"></div>
<div class="r" style="left:1109.00px;top:155.34px;width:1.00px;height:51.78px;background:#e6e6e6;"></div>
<div class="r" style="left:1260.00px;top:155.34px;width:1.00px;height:51.78px;background:#e6e6e6;"></div>
<div class="r" style="left:1411.00px;top:155.34px;width:1.00px;height:51.78px;background:#e6e6e6;"></div>
<div class="r" style="left:1562.00px;top:155.34px;width:1.00px;height:51.78px;background:#e6e6e6;"></div>
<div class="r" style="left:1712.00px;top:155.34px;width:1.00px;height:51.78px;background:#e6e6e6;"></div>
<div class="r" style="left:1825.00px;top:155.34px;width:1.00px;height:51.78px;background:#e6e6e6;"></div>
<div class="t" style="right:1244.50px;text-align:right;top:170.84px;font-size:16.42px;color:#4a4a4a;font-weight:400;letter-spacing:-0.504px;">Using ad set bid ...</div>
<div class="t" style="left:701.00px;top:170.84px;font-size:16.42px;color:#4a4a4a;font-weight:400;letter-spacing:-0.534px;">Using ad set bud...</div>
<div class="t" style="left:852.00px;top:170.84px;font-size:16.42px;color:#4a4a4a;font-weight:400;letter-spacing:-0.473px;">7-day clic...</div>
<div class="t" style="right:837.69px;text-align:right;top:171.34px;font-size:16.63px;color:#4a4a4a;font-weight:400;letter-spacing:-0.685px;"><span class="du">81</span></div>
<div class="t" style="right:820.30px;text-align:right;top:170.34px;font-size:10.80px;color:#555;font-weight:400;letter-spacing:-0.296px;">[2]</div>
<div class="t" style="right:836.04px;text-align:right;top:193.84px;font-size:14.47px;color:#95989c;font-weight:400;letter-spacing:-0.535px;">Website purchases</div>
<div class="t" style="right:669.64px;text-align:right;top:171.34px;font-size:16.63px;color:#4a4a4a;font-weight:400;letter-spacing:-0.636px;">164,318</div>
<div class="t" style="right:518.64px;text-align:right;top:171.34px;font-size:16.63px;color:#4a4a4a;font-weight:400;letter-spacing:-0.636px;">327,389</div>
<div class="t" style="right:383.63px;text-align:right;top:171.34px;font-size:16.63px;color:#4a4a4a;font-weight:400;letter-spacing:-0.628px;"><span class="du">249.15<span style="display:inline-block;position:relative;width:23.5px;height:0"><svg width="23" height="17" viewBox="0 0 23 17" style="position:absolute;left:0.5px;bottom:-5px"><g fill="none" stroke="currentColor" stroke-width="1.4" stroke-linecap="round"><circle cx="1.5" cy="12" r="0.5"/><path d="M6.8 9.8 C8.8 8.6 9.6 11.6 7.4 11.9 C6.4 12 5.8 11.4 6.2 10.6 M6.3 11.5 L5.2 15.5"/><circle cx="11.2" cy="12" r="0.5"/><path d="M14 6.2 C16 5 19 5 21 5.8 C18 7 14.5 9.5 14.2 12 C14 14.8 17 15.6 21.5 14.8"/><circle cx="18" cy="11.5" r="0.5"/></g></svg></span></span></div>
<div class="t" style="right:367.30px;text-align:right;top:170.34px;font-size:10.80px;color:#555;font-weight:400;letter-spacing:-0.296px;">[2]</div>
<div class="t" style="right:383.04px;text-align:right;top:193.84px;font-size:14.47px;color:#95989c;font-weight:400;letter-spacing:-0.541px;">Per Purchase</div>
<div class="t" style="right:217.61px;text-align:right;top:171.34px;font-size:16.63px;color:#4a4a4a;font-weight:400;letter-spacing:-0.609px;">20,181.53<span style="display:inline-block;position:relative;width:23.5px;height:0"><svg width="23" height="17" viewBox="0 0 23 17" style="position:absolute;left:0.5px;bottom:-5px"><g fill="none" stroke="currentColor" stroke-width="1.4" stroke-linecap="round"><circle cx="1.5" cy="12" r="0.5"/><path d="M6.8 9.8 C8.8 8.6 9.6 11.6 7.4 11.9 C6.4 12 5.8 11.4 6.2 10.6 M6.3 11.5 L5.2 15.5"/><circle cx="11.2" cy="12" r="0.5"/><path d="M14 6.2 C16 5 19 5 21 5.8 C18 7 14.5 9.5 14.2 12 C14 14.8 17 15.6 21.5 14.8"/><circle cx="18" cy="11.5" r="0.5"/></g></svg></span></div>
<div class="t" style="right:104.67px;text-align:right;top:171.34px;font-size:16.63px;color:#4a4a4a;font-weight:400;letter-spacing:-0.665px;">Ongoing</div>
<div class="r" style="left:72.00px;top:155.34px;width:512.00px;height:51.78px;background:#f5f6f7;"></div>
<div class="r" style="left:126.00px;top:155.34px;width:1.00px;height:51.78px;background:#e3e3e3;"></div>
<div class="r" style="left:223.00px;top:155.34px;width:1.00px;height:51.78px;background:#e3e3e3;"></div>
<div class="r" style="left:86.00px;top:168.04px;width:26.00px;height:26.00px;background:#fff;border:1px solid #cfcfcf;border-radius:7px;box-sizing:border-box;"></div>
<div class="r" style="left:154.00px;top:169.84px;width:41.50px;height:23.50px;background:linear-gradient(90deg,#e3ecf8,#cfdff5);border:1px solid #c9d3e0;border-radius:12px;box-sizing:border-box;"></div>
<div class="r" style="left:173.50px;top:170.64px;width:22.00px;height:22.00px;background:#1877f2;border-radius:50%;"></div>
<div class="t" style="left:233.50px;top:171.34px;font-size:16.74px;color:#2563c0;font-weight:400;letter-spacing:-0.407px;">Advantage+ shopping campaign 10/10/2024 ...</div>
<div class="r" style="left:72.00px;top:207.12px;width:1774.00px;height:51.78px;background:#fff;"></div>
<div class="r" style="left:691.00px;top:207.12px;width:1.00px;height:51.78px;background:#e6e6e6;"></div>
<div class="r" style="left:843.00px;top:207.12px;width:1.00px;height:51.78px;background:#e6e6e6;"></div>
<div class="r" style="left:945.00px;top:207.12px;width:1.00px;height:51.78px;background:#e6e6e6;"></div>
<div class="r" style="left:1109.00px;top:207.12px;width:1.00px;height:51.78px;background:#e6e6e6;"></div>
<div class="r" style="left:1260.00px;top:207.12px;width:1.00px;height:51.78px;background:#e6e6e6;"></div>
<div class="r" style="left:1411.00px;top:207.12px;width:1.00px;height:51.78px;background:#e6e6e6;"></div>
<div class="r" style="left:1562.00px;top:207.12px;width:1.00px;height:51.78px;background:#e6e6e6;"></div>
<div class="r" style="left:1712.00px;top:207.12px;width:1.00px;height:51.78px;background:#e6e6e6;"></div>
<div class="r" style="left:1825.00px;top:207.12px;width:1.00px;height:51.78px;background:#e6e6e6;"></div>
<div class="t" style="right:1244.50px;text-align:right;top:222.62px;font-size:16.42px;color:#4a4a4a;font-weight:400;letter-spacing:-0.504px;">Using ad set bid ...</div>
<div class="t" style="left:701.00px;top:222.62px;font-size:16.42px;color:#4a4a4a;font-weight:400;letter-spacing:-0.534px;">Using ad set bud...</div>
<div class="t" style="left:852.00px;top:222.62px;font-size:16.42px;color:#4a4a4a;font-weight:400;letter-spacing:-0.473px;">7-day clic...</div>
<div class="r" style="left:1089.50px;top:222.32px;width:11.00px;height:1.30px;background:#4a4a4a;"></div>
<div class="t" style="right:820.04px;text-align:right;top:245.62px;font-size:14.47px;color:#95989c;font-weight:400;letter-spacing:-0.542px;">Website Purchase</div>
<div class="r" style="left:1240.00px;top:222.32px;width:11.00px;height:1.30px;background:#4a4a4a;"></div>
<div class="r" style="left:1391.00px;top:222.32px;width:11.00px;height:1.30px;background:#4a4a4a;"></div>
<div class="r" style="left:1542.50px;top:222.32px;width:11.00px;height:1.30px;background:#4a4a4a;"></div>
<div class="t" style="right:366.54px;text-align:right;top:245.62px;font-size:14.47px;color:#95989c;font-weight:400;letter-spacing:-0.541px;">Per Purchase</div>
<div class="t" style="right:217.60px;text-align:right;top:223.12px;font-size:16.63px;color:#4a4a4a;font-weight:400;letter-spacing:-0.599px;">0.00<span style="display:inline-block;position:relative;width:23.5px;height:0"><svg width="23" height="17" viewBox="0 0 23 17" style="position:absolute;left:0.5px;bottom:-5px"><g fill="none" stroke="currentColor" stroke-width="1.4" stroke-linecap="round"><circle cx="1.5" cy="12" r="0.5"/><path d="M6.8 9.8 C8.8 8.6 9.6 11.6 7.4 11.9 C6.4 12 5.8 11.4 6.2 10.6 M6.3 11.5 L5.2 15.5"/><circle cx="11.2" cy="12" r="0.5"/><path d="M14 6.2 C16 5 19 5 21 5.8 C18 7 14.5 9.5 14.2 12 C14 14.8 17 15.6 21.5 14.8"/><circle cx="18" cy="11.5" r="0.5"/></g></svg></span></div>
<div class="t" style="right:104.67px;text-align:right;top:223.12px;font-size:16.63px;color:#4a4a4a;font-weight:400;letter-spacing:-0.665px;">Ongoing</div>
<div class="r" style="left:72.00px;top:207.12px;width:512.00px;height:51.78px;background:#fff;"></div>
<div class="r" style="left:126.00px;top:207.12px;width:1.00px;height:51.78px;background:#e3e3e3;"></div>
<div class="r" style="left:223.00px;top:207.12px;width:1.00px;height:51.78px;background:#e3e3e3;"></div>
<div class="r" style="left:86.00px;top:219.82px;width:26.00px;height:26.00px;background:#fff;border:1px solid #cfcfcf;border-radius:7px;box-sizing:border-box;"></div>
<div class="r" style="left:154.00px;top:221.62px;width:41.50px;height:23.50px;background:linear-gradient(90deg,#e3ecf8,#cfdff5);border:1px solid #c9d3e0;border-radius:12px;box-sizing:border-box;"></div>
<div class="r" style="left:173.50px;top:222.42px;width:22.00px;height:22.00px;background:#1877f2;border-radius:50%;"></div>
<div class="t" style="left:233.50px;top:223.12px;font-size:16.74px;color:#2563c0;font-weight:400;letter-spacing:-0.407px;">Advantage+ shopping campaign 05/10/2024 ...</div>
<div class="r" style="left:72.00px;top:258.90px;width:1774.00px;height:51.78px;background:#f5f6f7;"></div>
<div class="r" style="left:691.00px;top:258.90px;width:1.00px;height:51.78px;background:#e6e6e6;"></div>
<div class="r" style="left:843.00px;top:258.90px;width:1.00px;height:51.78px;background:#e6e6e6;"></div>
<div class="r" style="left:945.00px;top:258.90px;width:1.00px;height:51.78px;background:#e6e6e6;"></div>
<div class="r" style="left:1109.00px;top:258.90px;width:1.00px;height:51.78px;background:#e6e6e6;"></div>
<div class="r" style="left:1260.00px;top:258.90px;width:1.00px;height:51.78px;background:#e6e6e6;"></div>
<div class="r" style="left:1411.00px;top:258.90px;width:1.00px;height:51.78px;background:#e6e6e6;"></div>
<div class="r" style="left:1562.00px;top:258.90px;width:1.00px;height:51.78px;background:#e6e6e6;"></div>
<div class="r" style="left:1712.00px;top:258.90px;width:1.00px;height:51.78px;background:#e6e6e6;"></div>
<div class="r" style="left:1825.00px;top:258.90px;width:1.00px;height:51.78px;background:#e6e6e6;"></div>
<div class="t" style="right:1244.50px;text-align:right;top:274.40px;font-size:16.42px;color:#4a4a4a;font-weight:400;letter-spacing:-0.504px;">Using ad set bid ...</div>
<div class="t" style="left:701.00px;top:274.40px;font-size:16.42px;color:#4a4a4a;font-weight:400;letter-spacing:-0.534px;">Using ad set bud...</div>
<div class="t" style="left:852.00px;top:274.40px;font-size:16.42px;color:#4a4a4a;font-weight:400;letter-spacing:-0.473px;">7-day clic...</div>
<div class="t" style="right:837.69px;text-align:right;top:274.90px;font-size:16.63px;color:#4a4a4a;font-weight:400;letter-spacing:-0.685px;"><span class="du">5</span></div>
<div class="t" style="right:820.30px;text-align:right;top:273.90px;font-size:10.80px;color:#555;font-weight:400;letter-spacing:-0.296px;">[2]</div>
<div class="t" style="right:836.04px;text-align:right;top:297.40px;font-size:14.47px;color:#95989c;font-weight:400;letter-spacing:-0.535px;">Website purchases</div>
<div class="t" style="right:669.63px;text-align:right;top:274.90px;font-size:16.63px;color:#4a4a4a;font-weight:400;letter-spacing:-0.628px;">19,506</div>
<div class="t" style="right:518.63px;text-align:right;top:274.90px;font-size:16.63px;color:#4a4a4a;font-weight:400;letter-spacing:-0.628px;">31,641</div>
<div class="t" style="right:383.63px;text-align:right;top:274.90px;font-size:16.63px;color:#4a4a4a;font-weight:400;letter-spacing:-0.628px;"><span class="du">420.24<span style="display:inline-block;position:relative;width:23.5px;height:0"><svg width="23" height="17" viewBox="0 0 23 17" style="position:absolute;left:0.5px;bottom:-5px"><g fill="none" stroke="currentColor" stroke-width="1.4" stroke-linecap="round"><circle cx="1.5" cy="12" r="0.5"/><path d="M6.8 9.8 C8.8 8.6 9.6 11.6 7.4 11.9 C6.4 12 5.8 11.4 6.2 10.6 M6.3 11.5 L5.2 15.5"/><circle cx="11.2" cy="12" r="0.5"/><path d="M14 6.2 C16 5 19 5 21 5.8 C18 7 14.5 9.5 14.2 12 C14 14.8 17 15.6 21.5 14.8"/><circle cx="18" cy="11.5" r="0.5"/></g></svg></span></span></div>
<div class="t" style="right:367.30px;text-align:right;top:273.90px;font-size:10.80px;color:#555;font-weight:400;letter-spacing:-0.296px;">[2]</div>
<div class="t" style="right:383.04px;text-align:right;top:297.40px;font-size:14.47px;color:#95989c;font-weight:400;letter-spacing:-0.541px;">Per Purchase</div>
<div class="t" style="right:217.60px;text-align:right;top:274.90px;font-size:16.63px;color:#4a4a4a;font-weight:400;letter-spacing:-0.599px;">2,101.20<span style="display:inline-block;position:relative;width:23.5px;height:0"><svg width="23" height="17" viewBox="0 0 23 17" style="position:absolute;left:0.5px;bottom:-5px"><g fill="none" stroke="currentColor" stroke-width="1.4" stroke-linecap="round"><circle cx="1.5" cy="12" r="0.5"/><path d="M6.8 9.8 C8.8 8.6 9.6 11.6 7.4 11.9 C6.4 12 5.8 11.4 6.2 10.6 M6.3 11.5 L5.2 15.5"/><circle cx="11.2" cy="12" r="0.5"/><path d="M14 6.2 C16 5 19 5 21 5.8 C18 7 14.5 9.5 14.2 12 C14 14.8 17 15.6 21.5 14.8"/><circle cx="18" cy="11.5" r="0.5"/></g></svg></span></div>
<div class="t" style="right:104.67px;text-align:right;top:274.90px;font-size:16.63px;color:#4a4a4a;font-weight:400;letter-spacing:-0.665px;">Ongoing</div>
<div class="r" style="left:72.00px;top:258.90px;width:512.00px;height:51.78px;background:#f5f6f7;"></div>
<div class="r" style="left:126.00px;top:258.90px;width:1.00px;height:51.78px;background:#e3e3e3;"></div>
<div class="r" style="left:223.00px;top:258.90px;width:1.00px;height:51.78px;background:#e3e3e3;"></div>
<div class="r" style="left:86.00px;top:271.60px;width:26.00px;height:26.00px;background:#fff;border:1px solid #cfcfcf;border-radius:7px;box-sizing:border-box;"></div>
<div class="r" style="left:154.00px;top:273.40px;width:41.50px;height:23.50px;background:linear-gradient(90deg,#e3ecf8,#cfdff5);border:1px solid #c9d3e0;border-radius:12px;box-sizing:border-box;"></div>
<div class="r" style="left:173.50px;top:274.20px;width:22.00px;height:22.00px;background:#1877f2;border-radius:50%;"></div>
<div class="t" style="left:233.50px;top:274.90px;font-size:16.74px;color:#2563c0;font-weight:400;letter-spacing:-0.407px;">Advantage+ shopping campaign 05/10/2024 ...</div>
<div class="r" style="left:72.00px;top:310.68px;width:1774.00px;height:51.78px;background:#fff;"></div>
<div class="r" style="left:691.00px;top:310.68px;width:1.00px;height:51.78px;background:#e6e6e6;"></div>
<div class="r" style="left:843.00px;top:310.68px;width:1.00px;height:51.78px;background:#e6e6e6;"></div>
<div class="r" style="left:945.00px;top:310.68px;width:1.00px;height:51.78px;background:#e6e6e6;"></div>
<div class="r" style="left:1109.00px;top:310.68px;width:1.00px;height:51.78px;background:#e6e6e6;"></div>
<div class="r" style="left:1260.00px;top:310.68px;width:1.00px;height:51.78px;background:#e6e6e6;"></div>
<div class="r" style="left:1411.00px;top:310.68px;width:1.00px;height:51.78px;background:#e6e6e6;"></div>
<div class="r" style="left:1562.00px;top:310.68px;width:1.00px;height:51.78px;background:#e6e6e6;"></div>
<div class="r" style="left:1712.00px;top:310.68px;width:1.00px;height:51.78px;background:#e6e6e6;"></div>
<div class="r" style="left:1825.00px;top:310.68px;width:1.00px;height:51.78px;background:#e6e6e6;"></div>
<div class="t" style="right:1244.50px;text-align:right;top:326.18px;font-size:16.42px;color:#4a4a4a;font-weight:400;letter-spacing:-0.504px;">Using ad set bid ...</div>
<div class="t" style="left:701.00px;top:326.18px;font-size:16.42px;color:#4a4a4a;font-weight:400;letter-spacing:-0.534px;">Using ad set bud...</div>
<div class="t" style="left:852.00px;top:326.18px;font-size:16.42px;color:#4a4a4a;font-weight:400;letter-spacing:-0.473px;">7-day clic...</div>
<div class="t" style="right:837.69px;text-align:right;top:326.68px;font-size:16.63px;color:#4a4a4a;font-weight:400;letter-spacing:-0.685px;"><span class="du">45</span></div>
<div class="t" style="right:820.30px;text-align:right;top:325.68px;font-size:10.80px;color:#555;font-weight:400;letter-spacing:-0.296px;">[2]</div>
<div class="t" style="right:836.04px;text-align:right;top:349.18px;font-size:14.47px;color:#95989c;font-weight:400;letter-spacing:-0.535px;">Website purchases</div>
<div class="t" style="right:669.63px;text-align:right;top:326.68px;font-size:16.63px;color:#4a4a4a;font-weight:400;letter-spacing:-0.628px;">30,859</div>
<div class="t" style="right:518.63px;text-align:right;top:326.68px;font-size:16.63px;color:#4a4a4a;font-weight:400;letter-spacing:-0.628px;">68,179</div>
<div class="t" style="right:383.63px;text-align:right;top:326.68px;font-size:16.63px;color:#4a4a4a;font-weight:400;letter-spacing:-0.628px;"><span class="du">215.94<span style="display:inline-block;position:relative;width:23.5px;height:0"><svg width="23" height="17" viewBox="0 0 23 17" style="position:absolute;left:0.5px;bottom:-5px"><g fill="none" stroke="currentColor" stroke-width="1.4" stroke-linecap="round"><circle cx="1.5" cy="12" r="0.5"/><path d="M6.8 9.8 C8.8 8.6 9.6 11.6 7.4 11.9 C6.4 12 5.8 11.4 6.2 10.6 M6.3 11.5 L5.2 15.5"/><circle cx="11.2" cy="12" r="0.5"/><path d="M14 6.2 C16 5 19 5 21 5.8 C18 7 14.5 9.5 14.2 12 C14 14.8 17 15.6 21.5 14.8"/><circle cx="18" cy="11.5" r="0.5"/></g></svg></span></span></div>
<div class="t" style="right:367.30px;text-align:right;top:325.68px;font-size:10.80px;color:#555;font-weight:400;letter-spacing:-0.296px;">[2]</div>
<div class="t" style="right:383.04px;text-align:right;top:349.18px;font-size:14.47px;color:#95989c;font-weight:400;letter-spacing:-0.541px;">Per Purchase</div>
<div class="t" style="right:217.60px;text-align:right;top:326.68px;font-size:16.63px;color:#4a4a4a;font-weight:400;letter-spacing:-0.599px;">9,717.22<span style="display:inline-block;position:relative;width:23.5px;height:0"><svg width="23" height="17" viewBox="0 0 23 17" style="position:absolute;left:0.5px;bottom:-5px"><g fill="none" stroke="currentColor" stroke-width="1.4" stroke-linecap="round"><circle cx="1.5" cy="12" r="0.5"/><path d="M6.8 9.8 C8.8 8.6 9.6 11.6 7.4 11.9 C6.4 12 5.8 11.4 6.2 10.6 M6.3 11.5 L5.2 15.5"/><circle cx="11.2" cy="12" r="0.5"/><path d="M14 6.2 C16 5 19 5 21 5.8 C18 7 14.5 9.5 14.2 12 C14 14.8 17 15.6 21.5 14.8"/><circle cx="18" cy="11.5" r="0.5"/></g></svg></span></div>
<div class="t" style="right:104.51px;text-align:right;top:327.18px;font-size:14.47px;color:#333;font-weight:400;letter-spacing:-0.512px;">Oct 22, 2024</div>
<div class="t" style="right:104.44px;text-align:right;top:349.18px;font-size:14.47px;color:#95989c;font-weight:400;letter-spacing:-0.444px;">2 days left</div>
<svg class="r" style="left:1736.00px;top:340.68px;" width="14" height="13" viewBox="0 0 14 13"><path d="M7 0.5 L13.5 12.5 H0.5Z" fill="#d2381e"/><path d="M7 4.5V8.5" stroke="#fff" stroke-width="1.6"/><circle cx="7" cy="10.5" r="0.9" fill="#fff"/></svg>
<div class="r" style="left:72.00px;top:310.68px;width:512.00px;height:51.78px;background:#fff;"></div>
<div class="r" style="left:126.00px;top:310.68px;width:1.00px;height:51.78px;background:#e3e3e3;"></div>
<div class="r" style="left:223.00px;top:310.68px;width:1.00px;height:51.78px;background:#e3e3e3;"></div>
<div class="r" style="left:86.00px;top:323.38px;width:26.00px;height:26.00px;background:#fff;border:1px solid #cfcfcf;border-radius:7px;box-sizing:border-box;"></div>
<div class="r" style="left:154.00px;top:325.18px;width:41.50px;height:23.50px;background:linear-gradient(90deg,#e3ecf8,#cfdff5);border:1px solid #c9d3e0;border-radius:12px;box-sizing:border-box;"></div>
<div class="r" style="left:173.50px;top:325.98px;width:22.00px;height:22.00px;background:#1877f2;border-radius:50%;"></div>
<div class="t" style="left:233.50px;top:326.68px;font-size:16.74px;color:#2563c0;font-weight:400;letter-spacing:-0.571px;">New Heels Campaign - upscaling Campaign</div>
<svg class="r" style="left:234.00px;top:346.18px;" width="12" height="12" viewBox="0 0 12 12"><rect x="0" y="8" width="2.2" height="4" fill="#333"/><rect x="3.2" y="5" width="2.2" height="7" fill="#333"/><rect x="6.4" y="2.5" width="2.2" height="9.5" fill="#333"/><rect x="9.6" y="0" width="2.2" height="12" fill="#333"/></svg>
<div class="t" style="left:251.70px;top:349.18px;font-size:14.47px;color:#444;font-weight:400;letter-spacing:-0.502px;">View charts</div>
<svg class="r" style="left:335.00px;top:345.18px;" width="14" height="14" viewBox="0 0 14 14"><path d="M0.5 13.5 L1.2 10 L9.8 1.4 C10.4 0.8 11.2 0.8 11.8 1.4 L12.6 2.2 C13.2 2.8 13.2 3.6 12.6 4.2 L4 12.8Z" fill="#333"/></svg>
<div class="t" style="left:353.60px;top:349.18px;font-size:14.47px;color:#444;font-weight:400;letter-spacing:-0.462px;">Edit</div>
<svg class="r" style="left:388.50px;top:345.18px;" width="15" height="14" viewBox="0 0 15 14"><path d="M3 2 C1.8 2.5 1.5 3.5 1.5 4.5 V12.5 C1.5 13.2 2 13.7 2.7 13.7 H4" fill="none" stroke="#333" stroke-width="1.2"/><path d="M4.5 0.5 H10 L14 4.5 V12 C14 12.7 13.5 13 13 13 H5.5 C5 13 4.5 12.7 4.5 12Z" fill="#333"/></svg>
<div class="t" style="left:408.00px;top:349.18px;font-size:14.47px;color:#444;font-weight:400;letter-spacing:-0.497px;">Duplicate</div>
<svg class="r" style="left:477.00px;top:344.68px;" width="14" height="15" viewBox="0 0 14 15"><path d="M8.5 0.5 L13.5 5.5 L11.5 6 L8.5 10 L9 12.5 L2 5.5 L4.5 6 L8 3Z" fill="#333"/><path d="M5 9 L0.8 14" stroke="#333" stroke-width="1.6"/></svg>
<div class="t" style="left:495.70px;top:349.18px;font-size:14.47px;color:#444;font-weight:400;letter-spacing:-0.516px;">Pin</div>
<div class="r" style="left:72.00px;top:362.46px;width:1774.00px;height:51.78px;background:#f0f0f0;"></div>
<div class="r" style="left:691.00px;top:362.46px;width:1.00px;height:51.78px;background:#e6e6e6;"></div>
<div class="r" style="left:843.00px;top:362.46px;width:1.00px;height:51.78px;background:#e6e6e6;"></div>
<div class="r" style="left:945.00px;top:362.46px;width:1.00px;height:51.78px;background:#e6e6e6;"></div>
<div class="r" style="left:1109.00px;top:362.46px;width:1.00px;height:51.78px;background:#e6e6e6;"></div>
<div class="r" style="left:1260.00px;top:362.46px;width:1.00px;height:51.78px;background:#e6e6e6;"></div>
<div class="r" style="left:1411.00px;top:362.46px;width:1.00px;height:51.78px;background:#e6e6e6;"></div>
<div class="r" style="left:1562.00px;top:362.46px;width:1.00px;height:51.78px;background:#e6e6e6;"></div>
<div class="r" style="left:1712.00px;top:362.46px;width:1.00px;height:51.78px;background:#e6e6e6;"></div>
<div class="r" style="left:1825.00px;top:362.46px;width:1.00px;height:51.78px;background:#e6e6e6;"></div>
<div class="t" style="right:1244.50px;text-align:right;top:377.96px;font-size:16.42px;color:#4a4a4a;font-weight:400;letter-spacing:-0.504px;">Using ad set bid ...</div>
<div class="t" style="left:701.00px;top:377.96px;font-size:16.42px;color:#4a4a4a;font-weight:400;letter-spacing:-0.534px;">Using ad set bud...</div>
<div class="t" style="left:852.00px;top:377.96px;font-size:16.42px;color:#4a4a4a;font-weight:400;letter-spacing:-0.405px;">-</div>
<div class="r" style="left:1089.50px;top:377.66px;width:11.00px;height:1.30px;background:#4a4a4a;"></div>
<div class="r" style="left:1240.00px;top:377.66px;width:11.00px;height:1.30px;background:#4a4a4a;"></div>
<div class="r" style="left:1391.00px;top:377.66px;width:11.00px;height:1.30px;background:#4a4a4a;"></div>
<div class="r" style="left:1542.50px;top:377.66px;width:11.00px;height:1.30px;background:#4a4a4a;"></div>
<div class="t" style="right:217.60px;text-align:right;top:378.46px;font-size:16.63px;color:#4a4a4a;font-weight:400;letter-spacing:-0.599px;">0.00<span style="display:inline-block;position:relative;width:23.5px;height:0"><svg width="23" height="17" viewBox="0 0 23 17" style="position:absolute;left:0.5px;bottom:-5px"><g fill="none" stroke="currentColor" stroke-width="1.4" stroke-linecap="round"><circle cx="1.5" cy="12" r="0.5"/><path d="M6.8 9.8 C8.8 8.6 9.6 11.6 7.4 11.9 C6.4 12 5.8 11.4 6.2 10.6 M6.3 11.5 L5.2 15.5"/><circle cx="11.2" cy="12" r="0.5"/><path d="M14 6.2 C16 5 19 5 21 5.8 C18 7 14.5 9.5 14.2 12 C14 14.8 17 15.6 21.5 14.8"/><circle cx="18" cy="11.5" r="0.5"/></g></svg></span></div>
<div class="t" style="right:104.67px;text-align:right;top:378.46px;font-size:16.63px;color:#4a4a4a;font-weight:400;letter-spacing:-0.665px;">Ongoing</div>
<div class="r" style="left:72.00px;top:362.46px;width:512.00px;height:51.78px;background:#f0f0f0;"></div>
<div class="r" style="left:126.00px;top:362.46px;width:1.00px;height:51.78px;background:#e3e3e3;"></div>
<div class="r" style="left:223.00px;top:362.46px;width:1.00px;height:51.78px;background:#e3e3e3;"></div>
<div class="r" style="left:86.00px;top:375.16px;width:26.00px;height:26.00px;background:#fff;border:1px solid #cfcfcf;border-radius:7px;box-sizing:border-box;"></div>
<div class="r" style="left:154.00px;top:376.96px;width:41.50px;height:23.50px;background:linear-gradient(90deg,#e3ecf8,#cfdff5);border:1px solid #c9d3e0;border-radius:12px;box-sizing:border-box;"></div>
<div class="r" style="left:173.50px;top:377.76px;width:22.00px;height:22.00px;background:#1877f2;border-radius:50%;"></div>
<div class="t" style="left:233.50px;top:378.46px;font-size:16.74px;color:#2563c0;font-weight:400;letter-spacing:-0.409px;">Advantage+ shopping campaign 30/09/202...</div>
<svg class="r" style="left:557.00px;top:371.96px;" width="13" height="13" viewBox="0 0 13 13"><path d="M0.5 12.5 L1 9.5 L9 1.5 C9.6 0.9 10.4 0.9 11 1.5 L11.5 2 C12.1 2.6 12.1 3.4 11.5 4 L3.5 12Z" fill="#555"/></svg>
<div class="r" style="left:72.00px;top:414.24px;width:1774.00px;height:51.78px;background:#fff;"></div>
<div class="r" style="left:691.00px;top:414.24px;width:1.00px;height:51.78px;background:#e6e6e6;"></div>
<div class="r" style="left:843.00px;top:414.24px;width:1.00px;height:51.78px;background:#e6e6e6;"></div>
<div class="r" style="left:945.00px;top:414.24px;width:1.00px;height:51.78px;background:#e6e6e6;"></div>
<div class="r" style="left:1109.00px;top:414.24px;width:1.00px;height:51.78px;background:#e6e6e6;"></div>
<div class="r" style="left:1260.00px;top:414.24px;width:1.00px;height:51.78px;background:#e6e6e6;"></div>
<div class="r" style="left:1411.00px;top:414.24px;width:1.00px;height:51.78px;background:#e6e6e6;"></div>
<div class="r" style="left:1562.00px;top:414.24px;width:1.00px;height:51.78px;background:#e6e6e6;"></div>
<div class="r" style="left:1712.00px;top:414.24px;width:1.00px;height:51.78px;background:#e6e6e6;"></div>
<div class="r" style="left:1825.00px;top:414.24px;width:1.00px;height:51.78px;background:#e6e6e6;"></div>
<div class="t" style="right:1244.50px;text-align:right;top:429.74px;font-size:16.42px;color:#4a4a4a;font-weight:400;letter-spacing:-0.504px;">Using ad set bid ...</div>
<div class="t" style="left:701.00px;top:429.74px;font-size:16.42px;color:#4a4a4a;font-weight:400;letter-spacing:-0.534px;">Using ad set bud...</div>
<div class="t" style="left:852.00px;top:429.74px;font-size:16.42px;color:#4a4a4a;font-weight:400;letter-spacing:-0.473px;">7-day clic...</div>
<div class="r" style="left:1089.50px;top:429.44px;width:11.00px;height:1.30px;background:#4a4a4a;"></div>
<div class="t" style="right:820.04px;text-align:right;top:452.74px;font-size:14.47px;color:#95989c;font-weight:400;letter-spacing:-0.542px;">Website Purchase</div>
<div class="t" style="right:669.62px;text-align:right;top:430.24px;font-size:16.63px;color:#4a4a4a;font-weight:400;letter-spacing:-0.617px;">2,075</div>
<div class="t" style="right:518.62px;text-align:right;top:430.24px;font-size:16.63px;color:#4a4a4a;font-weight:400;letter-spacing:-0.617px;">2,332</div>
<div class="r" style="left:1542.50px;top:429.44px;width:11.00px;height:1.30px;background:#4a4a4a;"></div>
<div class="t" style="right:366.54px;text-align:right;top:452.74px;font-size:14.47px;color:#95989c;font-weight:400;letter-spacing:-0.541px;">Per Purchase</div>
<div class="t" style="right:217.63px;text-align:right;top:430.24px;font-size:16.63px;color:#4a4a4a;font-weight:400;letter-spacing:-0.628px;">509.05<span style="display:inline-block;position:relative;width:23.5px;height:0"><svg width="23" height="17" viewBox="0 0 23 17" style="position:absolute;left:0.5px;bottom:-5px"><g fill="none" stroke="currentColor" stroke-width="1.4" stroke-linecap="round"><circle cx="1.5" cy="12" r="0.5"/><path d="M6.8 9.8 C8.8 8.6 9.6 11.6 7.4 11.9 C6.4 12 5.8 11.4 6.2 10.6 M6.3 11.5 L5.2 15.5"/><circle cx="11.2" cy="12" r="0.5"/><path d="M14 6.2 C16 5 19 5 21 5.8 C18 7 14.5 9.5 14.2 12 C14 14.8 17 15.6 21.5 14.8"/><circle cx="18" cy="11.5" r="0.5"/></g></svg></span></div>
<div class="t" style="right:104.67px;text-align:right;top:430.24px;font-size:16.63px;color:#4a4a4a;font-weight:400;letter-spacing:-0.665px;">Ongoing</div>
<div class="r" style="left:72.00px;top:414.24px;width:512.00px;height:51.78px;background:#fff;"></div>
<div class="r" style="left:126.00px;top:414.24px;width:1.00px;height:51.78px;background:#e3e3e3;"></div>
<div class="r" style="left:223.00px;top:414.24px;width:1.00px;height:51.78px;background:#e3e3e3;"></div>
<div class="r" style="left:86.00px;top:426.94px;width:26.00px;height:26.00px;background:#fff;border:1px solid #cfcfcf;border-radius:7px;box-sizing:border-box;"></div>
<div class="r" style="left:154.00px;top:428.74px;width:41.50px;height:23.50px;background:#fff;border:1px solid #dcdcdc;border-radius:12px;box-sizing:border-box;"></div>
<div class="r" style="left:156.50px;top:431.24px;width:18.50px;height:18.50px;background:#444;border-radius:50%;"></div>
<div class="t" style="left:233.50px;top:430.24px;font-size:16.74px;color:#2563c0;font-weight:400;letter-spacing:-0.559px;">New Sales campaign</div>
<div class="r" style="left:72.00px;top:466.02px;width:1774.00px;height:51.78px;background:#f5f6f7;"></div>
<div class="r" style="left:691.00px;top:466.02px;width:1.00px;height:51.78px;background:#e6e6e6;"></div>
<div class="r" style="left:843.00px;top:466.02px;width:1.00px;height:51.78px;background:#e6e6e6;"></div>
<div class="r" style="left:945.00px;top:466.02px;width:1.00px;height:51.78px;background:#e6e6e6;"></div>
<div class="r" style="left:1109.00px;top:466.02px;width:1.00px;height:51.78px;background:#e6e6e6;"></div>
<div class="r" style="left:1260.00px;top:466.02px;width:1.00px;height:51.78px;background:#e6e6e6;"></div>
<div class="r" style="left:1411.00px;top:466.02px;width:1.00px;height:51.78px;background:#e6e6e6;"></div>
<div class="r" style="left:1562.00px;top:466.02px;width:1.00px;height:51.78px;background:#e6e6e6;"></div>
<div class="r" style="left:1712.00px;top:466.02px;width:1.00px;height:51.78px;background:#e6e6e6;"></div>
<div class="r" style="left:1825.00px;top:466.02px;width:1.00px;height:51.78px;background:#e6e6e6;"></div>
<div class="t" style="right:1244.50px;text-align:right;top:481.52px;font-size:16.42px;color:#4a4a4a;font-weight:400;letter-spacing:-0.504px;">Using ad set bid ...</div>
<div class="t" style="left:701.00px;top:481.52px;font-size:16.42px;color:#4a4a4a;font-weight:400;letter-spacing:-0.534px;">Using ad set bud...</div>
<div class="t" style="left:852.00px;top:481.52px;font-size:16.42px;color:#4a4a4a;font-weight:400;letter-spacing:-0.473px;">7-day clic...</div>
<div class="t" style="right:837.69px;text-align:right;top:482.02px;font-size:16.63px;color:#4a4a4a;font-weight:400;letter-spacing:-0.685px;"><span class="du">4</span></div>
<div class="t" style="right:820.30px;text-align:right;top:481.02px;font-size:10.80px;color:#555;font-weight:400;letter-spacing:-0.296px;">[2]</div>
<div class="t" style="right:836.04px;text-align:right;top:504.52px;font-size:14.47px;color:#95989c;font-weight:400;letter-spacing:-0.535px;">Website purchases</div>
<div class="t" style="right:669.63px;text-align:right;top:482.02px;font-size:16.63px;color:#4a4a4a;font-weight:400;letter-spacing:-0.628px;">19,576</div>
<div class="t" style="right:518.63px;text-align:right;top:482.02px;font-size:16.63px;color:#4a4a4a;font-weight:400;letter-spacing:-0.628px;">32,205</div>
<div class="t" style="right:383.63px;text-align:right;top:482.02px;font-size:16.63px;color:#4a4a4a;font-weight:400;letter-spacing:-0.628px;"><span class="du">772.81<span style="display:inline-block;position:relative;width:23.5px;height:0"><svg width="23" height="17" viewBox="0 0 23 17" style="position:absolute;left:0.5px;bottom:-5px"><g fill="none" stroke="currentColor" stroke-width="1.4" stroke-linecap="round"><circle cx="1.5" cy="12" r="0.5"/><path d="M6.8 9.8 C8.8 8.6 9.6 11.6 7.4 11.9 C6.4 12 5.8 11.4 6.2 10.6 M6.3 11.5 L5.2 15.5"/><circle cx="11.2" cy="12" r="0.5"/><path d="M14 6.2 C16 5 19 5 21 5.8 C18 7 14.5 9.5 14.2 12 C14 14.8 17 15.6 21.5 14.8"/><circle cx="18" cy="11.5" r="0.5"/></g></svg></span></span></div>
<div class="t" style="right:367.30px;text-align:right;top:481.02px;font-size:10.80px;color:#555;font-weight:400;letter-spacing:-0.296px;">[2]</div>
<div class="t" style="right:383.04px;text-align:right;top:504.52px;font-size:14.47px;color:#95989c;font-weight:400;letter-spacing:-0.541px;">Per Purchase</div>
<div class="t" style="right:217.60px;text-align:right;top:482.02px;font-size:16.63px;color:#4a4a4a;font-weight:400;letter-spacing:-0.599px;">3,091.24<span style="display:inline-block;position:relative;width:23.5px;height:0"><svg width="23" height="17" viewBox="0 0 23 17" style="position:absolute;left:0.5px;bottom:-5px"><g fill="none" stroke="currentColor" stroke-width="1.4" stroke-linecap="round"><circle cx="1.5" cy="12" r="0.5"/><path d="M6.8 9.8 C8.8 8.6 9.6 11.6 7.4 11.9 C6.4 12 5.8 11.4 6.2 10.6 M6.3 11.5 L5.2 15.5"/><circle cx="11.2" cy="12" r="0.5"/><path d="M14 6.2 C16 5 19 5 21 5.8 C18 7 14.5 9.5 14.2 12 C14 14.8 17 15.6 21.5 14.8"/><circle cx="18" cy="11.5" r="0.5"/></g></svg></span></div>
<div class="t" style="right:104.67px;text-align:right;top:482.02px;font-size:16.63px;color:#4a4a4a;font-weight:400;letter-spacing:-0.665px;">Ongoing</div>
<div class="r" style="left:72.00px;top:466.02px;width:512.00px;height:51.78px;background:#f5f6f7;"></div>
<div class="r" style="left:126.00px;top:466.02px;width:1.00px;height:51.78px;background:#e3e3e3;"></div>
<div class="r" style="left:223.00px;top:466.02px;width:1.00px;height:51.78px;background:#e3e3e3;"></div>
<div class="r" style="left:86.00px;top:478.72px;width:26.00px;height:26.00px;background:#fff;border:1px solid #cfcfcf;border-radius:7px;box-sizing:border-box;"></div>
<div class="r" style="left:154.00px;top:480.52px;width:41.50px;height:23.50px;background:#fff;border:1px solid #dcdcdc;border-radius:12px;box-sizing:border-box;"></div>
<div class="r" style="left:156.50px;top:483.02px;width:18.50px;height:18.50px;background:#444;border-radius:50%;"></div>
<div class="t" style="left:233.50px;top:482.02px;font-size:16.74px;color:#2563c0;font-weight:400;letter-spacing:-0.492px;">Sneakers Sales manual 10/9/2024</div>
<div class="r" style="left:584.00px;top:0.00px;width:6.00px;height:507.50px;background:linear-gradient(90deg,rgba(0,0,0,0.10),rgba(0,0,0,0));"></div>
</div>
<div class="r" style="left:590.00px;top:222.50px;width:10.00px;height:53.00px;background:#fff;"></div>
<div class="t" style="right:1283.57px;text-align:right;top:249.50px;font-size:15.88px;color:#2a2a2a;font-weight:700;letter-spacing:-0.566px;">Bid strategy</div>
<div class="r" style="left:72.00px;top:222.50px;width:512.00px;height:53.00px;background:#fff;"></div>
<div class="r" style="left:126.00px;top:222.50px;width:1.00px;height:53.00px;background:#e3e3e3;"></div>
<div class="r" style="left:223.00px;top:222.50px;width:1.00px;height:53.00px;background:#e3e3e3;"></div>
<div class="r" style="left:584.00px;top:222.50px;width:6.00px;height:53.00px;background:linear-gradient(90deg,rgba(0,0,0,0.10),rgba(0,0,0,0));"></div>
<div class="r" style="left:86.00px;top:237.30px;width:26.00px;height:26.00px;background:#fff;border:1px solid #cfcfcf;border-radius:7px;box-sizing:border-box;"></div>
<div class="t" style="left:138.80px;top:249.50px;font-size:15.88px;color:#2a2a2a;font-weight:700;letter-spacing:-0.539px;">Off / On</div>
<div class="t" style="left:235.50px;top:249.50px;font-size:15.88px;color:#2a2a2a;font-weight:700;letter-spacing:-0.711px;">Campaign</div>
<svg class="r" style="left:564.50px;top:247.50px;" width="10" height="6" viewBox="0 0 10 6"><path d="M0 0H10L5.0 6Z" fill="#222222"/></svg>
<div class="t" style="left:704.00px;top:249.50px;font-size:15.88px;color:#2a2a2a;font-weight:700;letter-spacing:-0.675px;">Budget</div>
<div class="t" style="left:855.00px;top:239.00px;font-size:15.88px;color:#2a2a2a;font-weight:700;letter-spacing:-0.546px;">Attribution</div>
<div class="t" style="left:855.00px;top:258.80px;font-size:15.88px;color:#2a2a2a;font-weight:700;letter-spacing:-0.551px;">setting</div>
<svg class="r" style="left:957.00px;top:241.00px;" width="14" height="14" viewBox="0 0 14 14"><circle cx="7" cy="7" r="7" fill="#1877f2"/><rect x="6" y="5.8" width="2" height="5.5" fill="#fff"/><circle cx="7" cy="3.7" r="1.1" fill="#fff"/></svg>
<div class="t" style="left:980.50px;top:249.50px;font-size:15.88px;color:#2a2a2a;font-weight:700;letter-spacing:-0.607px;">Results</div>
<svg class="r" style="left:1090.50px;top:247.50px;" width="10" height="6" viewBox="0 0 10 6"><path d="M0 0H10L5.0 6Z" fill="#222222"/></svg>
<div class="t" style="left:1122.00px;top:249.50px;font-size:15.88px;color:#2a2a2a;font-weight:700;letter-spacing:-0.706px;">Reach</div>
<svg class="r" style="left:1240.50px;top:247.50px;" width="10" height="6" viewBox="0 0 10 6"><path d="M0 0H10L5.0 6Z" fill="#222222"/></svg>
<div class="t" style="left:1273.00px;top:249.50px;font-size:15.88px;color:#2a2a2a;font-weight:700;letter-spacing:-0.630px;">Impressions</div>
<svg class="r" style="left:1391.50px;top:247.50px;" width="10" height="6" viewBox="0 0 10 6"><path d="M0 0H10L5.0 6Z" fill="#222222"/></svg>
<div class="t" style="left:1424.00px;top:249.50px;font-size:15.88px;color:#2a2a2a;font-weight:700;letter-spacing:-0.553px;">Cost per result</div>
<svg class="r" style="left:1542.50px;top:247.50px;" width="10" height="6" viewBox="0 0 10 6"><path d="M0 0H10L5.0 6Z" fill="#222222"/></svg>
<div class="t" style="left:1575.00px;top:249.50px;font-size:15.88px;color:#2a2a2a;font-weight:700;letter-spacing:-0.659px;">Amount spent</div>
<svg class="r" style="left:1694.00px;top:247.50px;" width="10" height="6" viewBox="0 0 10 6"><path d="M0 0H10L5.0 6Z" fill="#222222"/></svg>
<div class="t" style="left:1724.50px;top:249.50px;font-size:15.88px;color:#2a2a2a;font-weight:700;letter-spacing:-0.719px;">Ends</div>
<svg class="r" style="left:1805.50px;top:247.50px;" width="10" height="6" viewBox="0 0 10 6"><path d="M0 0H10L5.0 6Z" fill="#222222"/></svg>
<svg class="r" style="left:1832.00px;top:241.00px;" width="15" height="15" viewBox="0 0 15 15"><circle cx="7.5" cy="7.2" r="7" fill="#d3d3d3"/><path d="M7.5 3.5V11M3.8 7.2H11.2" stroke="#fff" stroke-width="2"/></svg>
<div class="r" style="left:72.00px;top:784.00px;width:1774.00px;height:72.00px;background:#fff;"></div>
<div class="r" style="left:72.00px;top:784.00px;width:1774.00px;height:3.00px;background:linear-gradient(180deg,rgba(0,0,0,0.08),rgba(0,0,0,0));"></div>
<div class="r" style="left:223.00px;top:784.00px;width:1.00px;height:72.00px;background:#e6e6e6;"></div>
<div class="r" style="left:584.00px;top:784.00px;width:1.00px;height:72.00px;background:#e6e6e6;"></div>
<div class="r" style="left:843.00px;top:784.00px;width:1.00px;height:72.00px;background:#e6e6e6;"></div>
<div class="r" style="left:945.00px;top:784.00px;width:1.00px;height:72.00px;background:#e6e6e6;"></div>
<div class="r" style="left:1109.00px;top:784.00px;width:1.00px;height:72.00px;background:#e6e6e6;"></div>
<div class="r" style="left:1260.00px;top:784.00px;width:1.00px;height:72.00px;background:#e6e6e6;"></div>
<div class="r" style="left:1411.00px;top:784.00px;width:1.00px;height:72.00px;background:#e6e6e6;"></div>
<div class="r" style="left:1562.00px;top:784.00px;width:1.00px;height:72.00px;background:#e6e6e6;"></div>
<div class="r" style="left:1712.00px;top:784.00px;width:1.00px;height:72.00px;background:#e6e6e6;"></div>
<div class="r" style="left:1825.00px;top:784.00px;width:1.00px;height:72.00px;background:#e6e6e6;"></div>
<div class="r" style="left:584.00px;top:784.00px;width:6.00px;height:72.00px;background:linear-gradient(90deg,rgba(0,0,0,0.08),rgba(0,0,0,0));"></div>
<div class="t" style="left:238.00px;top:802.80px;font-size:16.20px;color:#222222;font-weight:700;letter-spacing:-0.626px;">Results from 182 campaigns</div>
<svg class="r" style="left:444.50px;top:796.00px;" width="14" height="14" viewBox="0 0 14 14"><circle cx="7" cy="7" r="7" fill="#444"/><rect x="6" y="5.8" width="2" height="5.5" fill="#fff"/><circle cx="7" cy="3.7" r="1.1" fill="#fff"/></svg>
<div class="t" style="left:238.00px;top:825.60px;font-size:14.47px;color:#95989c;font-weight:400;letter-spacing:-0.501px;">Excludes deleted items</div>
<div class="t" style="left:854.00px;top:802.80px;font-size:16.20px;color:#222222;font-weight:700;letter-spacing:-0.503px;">Multiple a...</div>
<div class="r" style="left:1091.00px;top:801.80px;width:11.50px;height:2.00px;background:#333;"></div>
<div class="t" style="right:817.99px;text-align:right;top:825.60px;font-size:14.47px;color:#95989c;font-weight:400;letter-spacing:-0.486px;">Multiple conversions</div>
<div class="t" style="right:667.12px;text-align:right;top:802.80px;font-size:16.20px;color:#222222;font-weight:700;letter-spacing:-0.620px;"><span class="du">308,803</span></div>
<div class="t" style="right:672.49px;text-align:right;top:825.60px;font-size:14.47px;color:#95989c;font-weight:400;letter-spacing:-0.488px;">Accounts Center ac...</div>
<div class="t" style="right:516.12px;text-align:right;top:802.80px;font-size:16.20px;color:#222222;font-weight:700;letter-spacing:-0.620px;">724,764</div>
<div class="t" style="right:515.95px;text-align:right;top:825.60px;font-size:14.47px;color:#95989c;font-weight:400;letter-spacing:-0.453px;">Total</div>
<div class="r" style="left:1543.50px;top:801.80px;width:11.50px;height:2.00px;background:#333;"></div>
<div class="t" style="right:365.49px;text-align:right;top:825.60px;font-size:14.47px;color:#95989c;font-weight:400;letter-spacing:-0.486px;">Multiple conversions</div>
<div class="t" style="right:215.59px;text-align:right;top:802.80px;font-size:16.20px;color:#222222;font-weight:700;letter-spacing:-0.593px;">58,801.72<span style="display:inline-block;position:relative;width:23.5px;height:0"><svg width="23" height="17" viewBox="0 0 23 17" style="position:absolute;left:0.5px;bottom:-5px"><g fill="none" stroke="currentColor" stroke-width="1.4" stroke-linecap="round"><circle cx="1.5" cy="12" r="0.5"/><path d="M6.8 9.8 C8.8 8.6 9.6 11.6 7.4 11.9 C6.4 12 5.8 11.4 6.2 10.6 M6.3 11.5 L5.2 15.5"/><circle cx="11.2" cy="12" r="0.5"/><path d="M14 6.2 C16 5 19 5 21 5.8 C18 7 14.5 9.5 14.2 12 C14 14.8 17 15.6 21.5 14.8"/><circle cx="18" cy="11.5" r="0.5"/></g></svg></span></div>
<div class="t" style="right:215.47px;text-align:right;top:825.60px;font-size:14.47px;color:#95989c;font-weight:400;letter-spacing:-0.471px;">Total spent</div>
<div class="r" style="left:72.00px;top:855.00px;width:1774.00px;height:1.00px;background:#e8e8e8;"></div>
<div class="r" style="left:309.00px;top:857.00px;width:1561.00px;height:10.00px;background:#7f7f7f;border-radius:5px;"></div>
<div class="r" style="left:1836.00px;top:222.00px;width:10.00px;height:634.00px;background:linear-gradient(90deg,rgba(0,0,0,0),rgba(0,0,0,0.07));"></div>
<div class="r" style="left:1846.00px;top:0.00px;width:49.00px;height:886.00px;background:#616161;"></div>
<div class="r" style="left:1850.00px;top:5.70px;width:41.00px;height:41.00px;background:#7a7a7a;border-radius:8px;"></div>
<div class="r" style="left:1850.00px;top:56.00px;width:41.00px;height:41.00px;background:#7a7a7a;border-radius:8px;"></div>
<div class="r" style="left:1850.00px;top:104.70px;width:41.00px;height:41.00px;background:#7a7a7a;border-radius:8px;"></div>
<svg class="r" style="left:1860.00px;top:16.00px;" width="20" height="19" viewBox="0 0 20 19"><rect x="1.9" y="11.8" width="3.1" height="5.9" fill="#fff"/><rect x="6.6" y="5.4" width="3.2" height="12.3" fill="#fff"/><rect x="11.4" y="8.6" width="3.2" height="9.1" fill="#fff"/><rect x="15.8" y="2.3" width="3.2" height="15.4" fill="#fff"/></svg>
<svg class="r" style="left:1860.00px;top:66.00px;" width="20" height="20" viewBox="0 0 20 20"><path d="M1.9 18.1 L2.8 14.2 L12.8 4.2 L15.8 7.2 L5.8 17.2Z" fill="#fff"/><path d="M14 3 L15.6 1.4 C16.2 0.8 17 0.8 17.6 1.4 L18.6 2.4 C19.2 3 19.2 3.8 18.6 4.4 L17 6Z" fill="#fff"/></svg>
<svg class="r" style="left:1860.00px;top:115.00px;" width="21" height="21" viewBox="0 0 21 21"><circle cx="10.5" cy="10.5" r="9.5" fill="#fff"/><path d="M10 5V11.5L14 14" fill="none" stroke="#7a7a7a" stroke-width="2"/></svg>
<div class="r" style="left:1895.00px;top:0.00px;width:25.00px;height:886.00px;background:#f1f1f1;"></div>
<div class="r" style="left:1897.00px;top:22.00px;width:21.00px;height:835.00px;background:#c1c1c1;"></div>
<svg class="r" style="left:1902.00px;top:6.00px;" width="12" height="7" viewBox="0 0 12 7"><path d="M0 7H12L6 0Z" fill="#a3a3a3"/></svg>
<svg class="r" style="left:1902.00px;top:871.00px;" width="12" height="7" viewBox="0 0 12 7"><path d="M0 0H12L6 7Z" fill="#505050"/></svg>
<div class="r" style="left:0.00px;top:886.00px;width:1920.00px;height:60.00px;background:#33302a;"></div>
<svg class="r" style="left:23.50px;top:903.50px;" width="25" height="25" viewBox="0 0 25 25"><path d="M0 3.5 L10.5 2 V11.8 H0Z M12 1.8 L25 0 V11.8 H12Z M0 13.2 H10.5 V23 L0 21.5Z M12 13.2 H25 V25 L12 23.2Z" fill="#fff"/></svg>
<div class="r" style="left:72.50px;top:886.00px;width:430.50px;height:60.00px;background:#f0f0f0;border-top:2px solid #bdbdbd;border-left:1px solid #c8c8c8;border-bottom:2px solid #c4c4c4;box-sizing:border-box;"></div>
<svg class="r" style="left:384.00px;top:880.00px;" width="128" height="66" viewBox="0 0 128 66"><defs><linearGradient id="br" x1="0" y1="0" x2="1" y2="1"><stop offset="0" stop-color="#9a7556"/><stop offset="1" stop-color="#6e4626"/></linearGradient></defs><path d="M56 6.5 C62 9 67 14 70 21 L68 22 C65 16 61 11 56 7.5Z" fill="#8d6b50"/><path d="M17 10 C35 9 55 12 72 22 C90 32 105 45 120 52 L120 66 L108 66 C100 55 90 45 76 35 C60 24 40 15 17 11Z" fill="url(#br)"/><path d="M16 16 C19 12 24 12 26 13 C24 19 20 23 19 24 C18 21 17 19 16 16Z" fill="#8fc43a"/><path d="M97 19 C98 26 99 31 100 36 C103 31 107 24 109 19 C105 22 102 25 100 28 C99 25 98 22 97 19Z" fill="#8fc43a"/><ellipse cx="55" cy="44" rx="27" ry="17" transform="rotate(18 55 44)" fill="#a99b8d"/><path d="M70 26 C78 22 84 30 83 40 C82 50 76 56 70 56 C74 46 74 36 70 26Z" fill="#978878"/><path d="M12 42 C16 40 26 44 36 49 L35 56 C26 54 16 50 12 46Z" fill="#a99b8d"/><circle cx="34" cy="29" r="13.5" fill="#a99b8d"/><ellipse cx="35" cy="30" rx="8" ry="7.5" fill="#d9d2c9"/><circle cx="30" cy="31" r="2" fill="#333"/><circle cx="36" cy="28.5" r="2" fill="#333"/><circle cx="36" cy="23" r="1.3" fill="#444"/><path d="M40 10 C41 13 42 16 41 19" stroke="#c9bfb4" stroke-width="2" fill="none"/><path d="M83 26 C85 28 85 31 84 32" stroke="#c9bfb4" stroke-width="2" fill="none"/></svg>
<svg class="r" style="left:89.00px;top:904.00px;" width="26" height="25" viewBox="0 0 26 25"><circle cx="16" cy="9" r="7.5" fill="none" stroke="#222" stroke-width="2"/><path d="M10.5 14.5 L1.5 23.5" stroke="#222" stroke-width="2.2"/></svg>
<div class="t" style="left:132.50px;top:918.00px;font-size:23.54px;color:#222;font-weight:400;letter-spacing:-0.811px;">Type here to search</div>
<svg class="r" style="left:526.00px;top:903.00px;" width="27" height="25" viewBox="0 0 27 25"><rect x="1" y="4.5" width="14" height="15" fill="none" stroke="#fff" stroke-width="1.5"/><path d="M1 1.5H15M1 23H15M20.5 0V25" stroke="#fff" stroke-width="1.5"/><rect x="19" y="9" width="3" height="3.5" fill="#fff"/></svg>
<svg class="r" style="left:590.00px;top:892.00px;" width="55" height="48" viewBox="0 0 55 48"><defs><linearGradient id="cg1" x1="0" y1="0" x2="0" y2="1"><stop offset="0" stop-color="#1ea5ff"/><stop offset="0.55" stop-color="#2fb54a"/><stop offset="1" stop-color="#f7d100"/></linearGradient><linearGradient id="cg2" x1="0" y1="0" x2="0" y2="1"><stop offset="0" stop-color="#a95be8"/><stop offset="0.55" stop-color="#f45c8c"/><stop offset="1" stop-color="#ffb04a"/></linearGradient></defs><path d="M28 7 H33 C35 7 36 8 36.5 10 L37.8 16 H30Z" fill="#1f5fe0"/><path d="M17.5 29 H26.5 L24.5 39 C22 39 19.5 38 18.5 35Z" fill="#f2603a"/><path d="M15.5 7 H30.5 C32.5 7 33.3 8.5 32.8 10.5 L25.5 28.5 C24.8 30 23.5 30.8 22 30.8 H12 C10 30.8 9 29.3 9.5 27.3 L13.3 9.5 C13.8 8 14.5 7 15.5 7Z" fill="url(#cg1)"/><path d="M34.5 16.7 H42.5 C44.5 16.7 45.3 18.5 44.8 20.5 L38.8 37 C38.3 38.5 36.8 39 35.3 39 H26.5 C24.5 39 23.8 37.5 24.3 35.5 L31.3 19 C31.8 17.5 33 16.7 34.5 16.7Z" fill="url(#cg2)"/></svg>
<svg class="r" style="left:675.00px;top:902.00px;" width="34" height="28" viewBox="0 0 34 28"><path d="M0 3 C0 1.5 1 0.5 2.5 0.5 H11 L14 3.5 H31.5 C33 3.5 34 4.5 34 6 V25 C34 26.5 33 27.5 31.5 27.5 H2.5 C1 27.5 0 26.5 0 25Z" fill="#f5c242"/><path d="M0 6 H34 V25 C34 26.5 33 27.5 31.5 27.5 H2.5 C1 27.5 0 26.5 0 25Z" fill="#ffd65c"/><path d="M8 27.5 V16.5 H26 V27.5 H21.5 V21 H12.5 V27.5Z" fill="#3b8fd9"/></svg>
<div class="r" style="left:731.00px;top:886.00px;width:73.00px;height:60.00px;background:#5f5a51;"></div>
<div class="r" style="left:731.00px;top:942.00px;width:73.00px;height:4.00px;background:#7cbcf0;"></div>
<svg class="r" style="left:735.00px;top:890.00px;" width="64" height="52" viewBox="0 0 64 52"><path d="M32.2 25.8 L15.29 19.64 A18 18 0 0 1 49.11 19.64Z" fill="#e8412c"/><path d="M32.2 25.8 L49.11 19.64 A18 18 0 0 1 29.07 43.53Z" fill="#f9bd1c"/><path d="M32.2 25.8 L29.07 43.53 A18 18 0 0 1 15.29 19.64Z" fill="#239a47"/><circle cx="32.2" cy="25.8" r="8.6" fill="#fff"/><circle cx="32.2" cy="25.8" r="7" fill="#2e7be6"/><circle cx="40.8" cy="34.9" r="12" fill="#1b1b1b"/><path d="M33.5 32 C36 30 45.5 30 48 32 L48 37.5 C45.5 39.5 36 39.5 33.5 37.5Z" fill="#5a5a5a"/><circle cx="40.8" cy="34.8" r="2.2" fill="#1b1b1b"/></svg>
<svg class="r" style="left:1507.00px;top:903.00px;" width="38" height="26" viewBox="0 0 38 26"><rect x="1.5" y="2" width="32" height="22" rx="2" fill="none" stroke="#fff" stroke-width="2"/><path d="M33.5 6 H36.5 V22 C36.5 23.5 35 24 33.5 24" fill="none" stroke="#fff" stroke-width="1.5"/><rect x="5.5" y="9.5" width="9" height="10" fill="none" stroke="#fff" stroke-width="2"/><path d="M18 10.5H29M18 15H29M18 19.5H29" stroke="#fff" stroke-width="2"/></svg>
<svg class="r" style="left:1582.00px;top:910.00px;" width="20" height="11" viewBox="0 0 20 11"><path d="M1 10 L10 1 L19 10" fill="none" stroke="#fff" stroke-width="1.5"/></svg>
<svg class="r" style="left:1615.00px;top:906.00px;" width="26" height="20" viewBox="0 0 26 20"><rect x="4" y="1" width="21" height="13" fill="none" stroke="#fff" stroke-width="1.3"/><path d="M14.5 14V18M9 18.5H20M1 3.5H7M1 3.5V18" fill="none" stroke="#fff" stroke-width="1.3"/><rect x="1" y="1" width="6" height="6" fill="#33302a" stroke="#fff" stroke-width="1.2"/></svg>
<svg class="r" style="left:1651.00px;top:906.00px;" width="26" height="20" viewBox="0 0 26 20"><path d="M1.5 7 H5.5 L10.5 2 V18 L5.5 13 H1.5Z" fill="none" stroke="#fff" stroke-width="1.3"/><path d="M14 7.5 C15.5 9 15.5 11 14 12.5M17.5 5 C20.5 8 20.5 12 17.5 15M21 2.5 C25.5 7 25.5 13 21 17.5" fill="none" stroke="#ccc" stroke-width="1.2"/></svg>
<div class="t" style="left:1692.50px;top:916.80px;font-size:17.20px;color:#fff;font-weight:400;letter-spacing:-0.6px;">ENG</div>
<div class="t" style="left:1487.86px;width:600px;text-align:center;top:902.50px;font-size:18.36px;color:#fff;font-weight:400;letter-spacing:-0.724px;">7:55 PM</div>
<div class="t" style="left:1488.86px;width:600px;text-align:center;top:930.30px;font-size:19.22px;color:#fff;font-weight:400;letter-spacing:-0.713px;">10/20/2024</div>
<svg class="r" style="left:1857.00px;top:903.00px;" width="38" height="38" viewBox="0 0 38 38"><path d="M1 1 H25 V19 H12 L8 24 V19 H1Z" fill="#fff"/><path d="M6 6H20M6 10H20M6 14H20" stroke="#33302a" stroke-width="1.3"/><circle cx="24.5" cy="24.5" r="12" fill="#33302a" stroke="#888" stroke-width="1"/></svg>
<div class="t" style="left:1581.86px;width:600px;text-align:center;top:928.00px;font-size:17.28px;color:#fff;font-weight:400;letter-spacing:-0.712px;">3</div>
<div class="r" style="left:1912.00px;top:886.00px;width:1.00px;height:60.00px;background:#8a8580;"></div>
</body></html>
